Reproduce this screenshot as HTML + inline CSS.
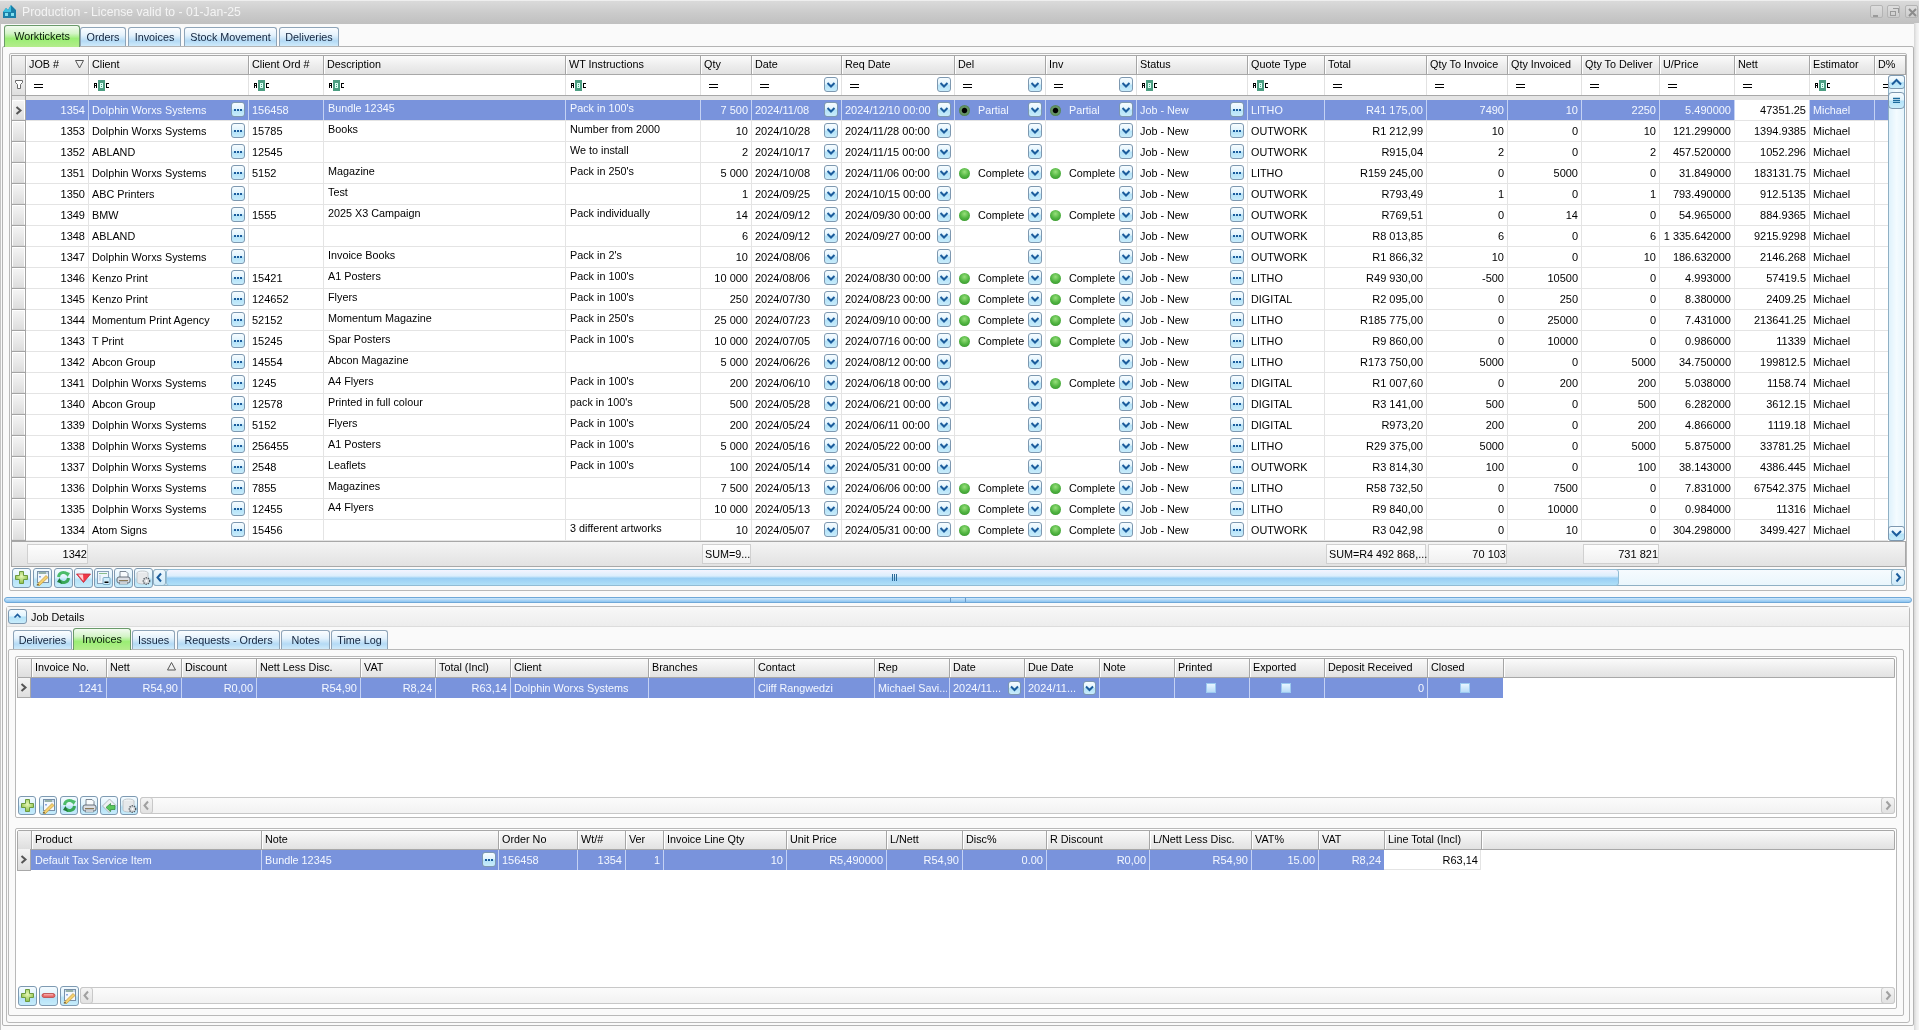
<!DOCTYPE html><html><head><meta charset="utf-8"><style>
*{box-sizing:border-box}
html,body{margin:0;padding:0}
body{width:1919px;height:1030px;overflow:hidden;background:#fafafa;font-family:"Liberation Sans",sans-serif;font-size:10.8px;color:#000;position:relative;will-change:transform}
div{position:absolute}
.t{white-space:nowrap;overflow:hidden;line-height:13px;height:14px}
.ts{white-space:nowrap;overflow:hidden;line-height:13px;height:14px;color:#f4f8ff}
.hl{background:#a3a3a3}
.gl{background:#e6e6e6}
.btn{border:1px solid #7d98b0;border-radius:3px;background:linear-gradient(#f6fcff 0%,#e2f4fd 45%,#b4e2f8 55%,#c8ecfb 100%)}
.dd svg,.el svg{position:absolute;left:0;top:0}
.tab{border:1px solid #8ea4b8;border-bottom:none;border-radius:3px 3px 0 0;background:linear-gradient(#fbfdff 0%,#e4f2fc 40%,#b4daf5 72%,#cfeafa 100%);color:#10203a;text-align:center;line-height:19px}
.tabA{border:1px solid #6a9a6a;border-bottom:none;border-radius:3px 3px 0 0;background:linear-gradient(#f2fbf0 0%,#d4f4c8 35%,#9aee74 60%,#b4ec8c 100%);color:#082008;text-align:center;line-height:19px}
.hdr{background:linear-gradient(#fbfbfb 0%,#efefef 45%,#e2e2e2 100%)}
.ind{background:linear-gradient(#f4f4f4,#dedede)}
.tbb{border:1px solid #7e9ab2;border-radius:3px;background:linear-gradient(#f4fbff 0%,#e0f3fc 45%,#b6e2f8 60%,#c6ecfb 100%)}
</style></head><body><div style="left:0px;top:0px;width:1919px;height:1px;background:#eeeeee"></div>
<div style="left:0px;top:1px;width:1919px;height:23px;background:linear-gradient(#dadada,#cacaca 55%,#c0c0c0)"></div>
<svg style="position:absolute;left:3px;top:4px" width="14" height="15" viewBox="0 0 14 15"><path d="M0 8 L3 4 L5 6 L8 1 L13 6 L13 14 L0 14 Z" fill="#1a7fa8"/><path d="M3 4 L5 6 L8 1 L8 8 L0 8Z" fill="#3cc0e0"/><rect x="2" y="9" width="3" height="3" fill="#7fe0f0"/><rect x="8" y="9" width="3" height="3" fill="#7fe0f0"/></svg>
<div class="t" style="left:22px;top:4px;width:260px;text-align:left;font-size:12.2px;color:#f4f4f4;line-height:16px;height:17px">Production - License valid to - 01-Jan-25</div>
<div style="left:1870px;top:5px;width:13px;height:13px;border:1px solid #b4b4b4;border-radius:2px;background:linear-gradient(#dedede,#cccccc)"><div style="left:2px;top:9px;width:5px;height:2px;background:#9a9a9a"></div></div>
<div style="left:1887px;top:5px;width:13px;height:13px;border:1px solid #b4b4b4;border-radius:2px;background:linear-gradient(#dedede,#cccccc)"><div style="left:2px;top:5px;width:6px;height:5px;border:1px solid #999"></div><div style="left:5px;top:2px;width:6px;height:5px;border:1px solid #999;border-left:none;border-bottom:none"></div></div>
<div style="left:1905px;top:5px;width:13px;height:13px;border:1px solid #b4b4b4;border-radius:2px;background:linear-gradient(#dedede,#cccccc)"><svg width="13" height="13" style="position:absolute;left:0;top:0"><path d="M3 3L10 10M10 3L3 10" stroke="#8c8c8c" stroke-width="2"/></svg></div>
<div style="left:1914px;top:23px;width:5px;height:1007px;background:linear-gradient(90deg,#d6d6d6,#ececec 50%,#f6f6f6)"></div>
<div style="left:0px;top:23px;width:1px;height:1007px;background:#c4c4c4"></div>
<div style="left:2px;top:46px;width:1912px;height:980px;border:1px solid #b4b4b4;border-radius:2px;background:#fafafa"></div>
<div class="tabA" style="left:4px;top:25px;width:76px;height:22px;"></div>
<div class="t" style="left:4px;top:30px;width:76px;text-align:center;color:#0a1f0a">Worktickets</div>
<div class="tab" style="left:80px;top:27px;width:46px;height:19px;"></div>
<div class="t" style="left:80px;top:31px;width:46px;text-align:center;color:#12243e">Orders</div>
<div class="tab" style="left:128px;top:27px;width:53px;height:19px;"></div>
<div class="t" style="left:128px;top:31px;width:53px;text-align:center;color:#12243e">Invoices</div>
<div class="tab" style="left:184px;top:27px;width:93px;height:19px;"></div>
<div class="t" style="left:184px;top:31px;width:93px;text-align:center;color:#12243e">Stock Movement</div>
<div class="tab" style="left:279px;top:27px;width:60px;height:19px;"></div>
<div class="t" style="left:279px;top:31px;width:60px;text-align:center;color:#12243e">Deliveries</div>
<div style="left:9px;top:53px;width:1898px;height:538px;border:1px solid #b9b9b9;border-radius:2px;background:#fafafa"></div>
<div style="left:11px;top:55px;width:1895px;height:487px;border:1px solid #a8a8a8;border-bottom:none;border-right:none;background:#fff"></div>
<div class="hdr" style="left:12px;top:56px;width:1893px;height:18px;"></div>
<div style="left:12px;top:74px;width:1893px;height:1px;background:#a8a8a8"></div>
<div class="ind" style="left:12px;top:56px;width:13px;height:18px;"></div>
<div style="left:25px;top:56px;width:1px;height:19px;background:#a5a5a5"></div>
<div style="left:26px;top:56px;width:1px;height:18px;background:#ffffff"></div>
<div style="left:88px;top:56px;width:1px;height:19px;background:#a5a5a5"></div>
<div style="left:89px;top:56px;width:1px;height:18px;background:#ffffff"></div>
<div style="left:248px;top:56px;width:1px;height:19px;background:#a5a5a5"></div>
<div style="left:249px;top:56px;width:1px;height:18px;background:#ffffff"></div>
<div style="left:323px;top:56px;width:1px;height:19px;background:#a5a5a5"></div>
<div style="left:324px;top:56px;width:1px;height:18px;background:#ffffff"></div>
<div style="left:565px;top:56px;width:1px;height:19px;background:#a5a5a5"></div>
<div style="left:566px;top:56px;width:1px;height:18px;background:#ffffff"></div>
<div style="left:700px;top:56px;width:1px;height:19px;background:#a5a5a5"></div>
<div style="left:701px;top:56px;width:1px;height:18px;background:#ffffff"></div>
<div style="left:751px;top:56px;width:1px;height:19px;background:#a5a5a5"></div>
<div style="left:752px;top:56px;width:1px;height:18px;background:#ffffff"></div>
<div style="left:841px;top:56px;width:1px;height:19px;background:#a5a5a5"></div>
<div style="left:842px;top:56px;width:1px;height:18px;background:#ffffff"></div>
<div style="left:954px;top:56px;width:1px;height:19px;background:#a5a5a5"></div>
<div style="left:955px;top:56px;width:1px;height:18px;background:#ffffff"></div>
<div style="left:1045px;top:56px;width:1px;height:19px;background:#a5a5a5"></div>
<div style="left:1046px;top:56px;width:1px;height:18px;background:#ffffff"></div>
<div style="left:1136px;top:56px;width:1px;height:19px;background:#a5a5a5"></div>
<div style="left:1137px;top:56px;width:1px;height:18px;background:#ffffff"></div>
<div style="left:1247px;top:56px;width:1px;height:19px;background:#a5a5a5"></div>
<div style="left:1248px;top:56px;width:1px;height:18px;background:#ffffff"></div>
<div style="left:1324px;top:56px;width:1px;height:19px;background:#a5a5a5"></div>
<div style="left:1325px;top:56px;width:1px;height:18px;background:#ffffff"></div>
<div style="left:1426px;top:56px;width:1px;height:19px;background:#a5a5a5"></div>
<div style="left:1427px;top:56px;width:1px;height:18px;background:#ffffff"></div>
<div style="left:1507px;top:56px;width:1px;height:19px;background:#a5a5a5"></div>
<div style="left:1508px;top:56px;width:1px;height:18px;background:#ffffff"></div>
<div style="left:1581px;top:56px;width:1px;height:19px;background:#a5a5a5"></div>
<div style="left:1582px;top:56px;width:1px;height:18px;background:#ffffff"></div>
<div style="left:1659px;top:56px;width:1px;height:19px;background:#a5a5a5"></div>
<div style="left:1660px;top:56px;width:1px;height:18px;background:#ffffff"></div>
<div style="left:1734px;top:56px;width:1px;height:19px;background:#a5a5a5"></div>
<div style="left:1735px;top:56px;width:1px;height:18px;background:#ffffff"></div>
<div style="left:1809px;top:56px;width:1px;height:19px;background:#a5a5a5"></div>
<div style="left:1810px;top:56px;width:1px;height:18px;background:#ffffff"></div>
<div style="left:1874px;top:56px;width:1px;height:19px;background:#a5a5a5"></div>
<div style="left:1875px;top:56px;width:1px;height:18px;background:#ffffff"></div>
<div style="left:1905px;top:56px;width:1px;height:19px;background:#a5a5a5"></div>
<div class="t" style="left:29px;top:58px;width:57px;text-align:left;">JOB #</div>
<div class="t" style="left:92px;top:58px;width:154px;text-align:left;">Client</div>
<div class="t" style="left:252px;top:58px;width:69px;text-align:left;">Client Ord #</div>
<div class="t" style="left:327px;top:58px;width:236px;text-align:left;">Description</div>
<div class="t" style="left:569px;top:58px;width:129px;text-align:left;">WT Instructions</div>
<div class="t" style="left:704px;top:58px;width:45px;text-align:left;">Qty</div>
<div class="t" style="left:755px;top:58px;width:84px;text-align:left;">Date</div>
<div class="t" style="left:845px;top:58px;width:107px;text-align:left;">Req Date</div>
<div class="t" style="left:958px;top:58px;width:85px;text-align:left;">Del</div>
<div class="t" style="left:1049px;top:58px;width:85px;text-align:left;">Inv</div>
<div class="t" style="left:1140px;top:58px;width:105px;text-align:left;">Status</div>
<div class="t" style="left:1251px;top:58px;width:71px;text-align:left;">Quote Type</div>
<div class="t" style="left:1328px;top:58px;width:96px;text-align:left;">Total</div>
<div class="t" style="left:1430px;top:58px;width:75px;text-align:left;">Qty To Invoice</div>
<div class="t" style="left:1511px;top:58px;width:68px;text-align:left;">Qty Invoiced</div>
<div class="t" style="left:1585px;top:58px;width:72px;text-align:left;">Qty To Deliver</div>
<div class="t" style="left:1663px;top:58px;width:69px;text-align:left;">U/Price</div>
<div class="t" style="left:1738px;top:58px;width:69px;text-align:left;">Nett</div>
<div class="t" style="left:1813px;top:58px;width:59px;text-align:left;">Estimator</div>
<div class="t" style="left:1878px;top:58px;width:25px;text-align:left;">D%</div>
<svg style="position:absolute;left:75px;top:60px" width="9" height="9"><path d="M0.5 0.5 L8.5 0.5 L4.5 8 Z" fill="none" stroke="#555" stroke-width="1"/></svg>
<div class="ind" style="left:12px;top:75px;width:13px;height:20px;"></div>
<svg style="position:absolute;left:14px;top:79px" width="10" height="11"><path d="M1.5 1.5 H8.5 V3.5 L6.5 5.5 V9.5 H3.5 V5.5 L1.5 3.5 Z" fill="#fff" stroke="#6a6a6a" stroke-width="1"/></svg>
<div style="left:88px;top:75px;width:1px;height:20px;background:#e2e2e2"></div>
<div style="left:248px;top:75px;width:1px;height:20px;background:#e2e2e2"></div>
<div style="left:323px;top:75px;width:1px;height:20px;background:#e2e2e2"></div>
<div style="left:565px;top:75px;width:1px;height:20px;background:#e2e2e2"></div>
<div style="left:700px;top:75px;width:1px;height:20px;background:#e2e2e2"></div>
<div style="left:751px;top:75px;width:1px;height:20px;background:#e2e2e2"></div>
<div style="left:841px;top:75px;width:1px;height:20px;background:#e2e2e2"></div>
<div style="left:954px;top:75px;width:1px;height:20px;background:#e2e2e2"></div>
<div style="left:1045px;top:75px;width:1px;height:20px;background:#e2e2e2"></div>
<div style="left:1136px;top:75px;width:1px;height:20px;background:#e2e2e2"></div>
<div style="left:1247px;top:75px;width:1px;height:20px;background:#e2e2e2"></div>
<div style="left:1324px;top:75px;width:1px;height:20px;background:#e2e2e2"></div>
<div style="left:1426px;top:75px;width:1px;height:20px;background:#e2e2e2"></div>
<div style="left:1507px;top:75px;width:1px;height:20px;background:#e2e2e2"></div>
<div style="left:1581px;top:75px;width:1px;height:20px;background:#e2e2e2"></div>
<div style="left:1659px;top:75px;width:1px;height:20px;background:#e2e2e2"></div>
<div style="left:1734px;top:75px;width:1px;height:20px;background:#e2e2e2"></div>
<div style="left:1809px;top:75px;width:1px;height:20px;background:#e2e2e2"></div>
<div style="left:1874px;top:75px;width:1px;height:20px;background:#e2e2e2"></div>
<div style="left:12px;top:95px;width:1893px;height:1px;background:#a8a8a8"></div>
<div style="left:12px;top:96px;width:1876px;height:4px;background:#e4e4e4"></div>
<svg style="position:absolute;left:34px;top:83px" width="9" height="6"><rect x="0" y="1" width="9" height="1" fill="#000"/><rect x="0" y="4" width="9" height="1" fill="#000"/></svg>
<svg style="position:absolute;left:94px;top:80px" width="16" height="11" shape-rendering="crispEdges"><rect x="4" y="0" width="7" height="11" rx="1" fill="#4c9e82"/><rect x="6" y="3" width="3" height="5" fill="#d8fff2"/><rect x="7" y="4" width="1" height="1" fill="#4c9e82"/><rect x="7" y="6" width="1" height="1" fill="#4c9e82"/><rect x="0" y="3" width="1" height="1" fill="#000"/><rect x="1" y="3" width="1" height="1" fill="#000"/><rect x="2" y="3" width="1" height="1" fill="#000"/><rect x="0" y="4" width="1" height="1" fill="#000"/><rect x="2" y="4" width="1" height="1" fill="#000"/><rect x="0" y="5" width="1" height="1" fill="#000"/><rect x="1" y="5" width="1" height="1" fill="#000"/><rect x="2" y="5" width="1" height="1" fill="#000"/><rect x="0" y="6" width="1" height="1" fill="#000"/><rect x="2" y="6" width="1" height="1" fill="#000"/><rect x="0" y="7" width="1" height="1" fill="#000"/><rect x="2" y="7" width="1" height="1" fill="#000"/><rect x="12" y="3" width="1" height="1" fill="#000"/><rect x="13" y="3" width="1" height="1" fill="#000"/><rect x="14" y="3" width="1" height="1" fill="#000"/><rect x="12" y="4" width="1" height="1" fill="#000"/><rect x="12" y="5" width="1" height="1" fill="#000"/><rect x="12" y="6" width="1" height="1" fill="#000"/><rect x="12" y="7" width="1" height="1" fill="#000"/><rect x="13" y="7" width="1" height="1" fill="#000"/><rect x="14" y="7" width="1" height="1" fill="#000"/></svg>
<svg style="position:absolute;left:254px;top:80px" width="16" height="11" shape-rendering="crispEdges"><rect x="4" y="0" width="7" height="11" rx="1" fill="#4c9e82"/><rect x="6" y="3" width="3" height="5" fill="#d8fff2"/><rect x="7" y="4" width="1" height="1" fill="#4c9e82"/><rect x="7" y="6" width="1" height="1" fill="#4c9e82"/><rect x="0" y="3" width="1" height="1" fill="#000"/><rect x="1" y="3" width="1" height="1" fill="#000"/><rect x="2" y="3" width="1" height="1" fill="#000"/><rect x="0" y="4" width="1" height="1" fill="#000"/><rect x="2" y="4" width="1" height="1" fill="#000"/><rect x="0" y="5" width="1" height="1" fill="#000"/><rect x="1" y="5" width="1" height="1" fill="#000"/><rect x="2" y="5" width="1" height="1" fill="#000"/><rect x="0" y="6" width="1" height="1" fill="#000"/><rect x="2" y="6" width="1" height="1" fill="#000"/><rect x="0" y="7" width="1" height="1" fill="#000"/><rect x="2" y="7" width="1" height="1" fill="#000"/><rect x="12" y="3" width="1" height="1" fill="#000"/><rect x="13" y="3" width="1" height="1" fill="#000"/><rect x="14" y="3" width="1" height="1" fill="#000"/><rect x="12" y="4" width="1" height="1" fill="#000"/><rect x="12" y="5" width="1" height="1" fill="#000"/><rect x="12" y="6" width="1" height="1" fill="#000"/><rect x="12" y="7" width="1" height="1" fill="#000"/><rect x="13" y="7" width="1" height="1" fill="#000"/><rect x="14" y="7" width="1" height="1" fill="#000"/></svg>
<svg style="position:absolute;left:329px;top:80px" width="16" height="11" shape-rendering="crispEdges"><rect x="4" y="0" width="7" height="11" rx="1" fill="#4c9e82"/><rect x="6" y="3" width="3" height="5" fill="#d8fff2"/><rect x="7" y="4" width="1" height="1" fill="#4c9e82"/><rect x="7" y="6" width="1" height="1" fill="#4c9e82"/><rect x="0" y="3" width="1" height="1" fill="#000"/><rect x="1" y="3" width="1" height="1" fill="#000"/><rect x="2" y="3" width="1" height="1" fill="#000"/><rect x="0" y="4" width="1" height="1" fill="#000"/><rect x="2" y="4" width="1" height="1" fill="#000"/><rect x="0" y="5" width="1" height="1" fill="#000"/><rect x="1" y="5" width="1" height="1" fill="#000"/><rect x="2" y="5" width="1" height="1" fill="#000"/><rect x="0" y="6" width="1" height="1" fill="#000"/><rect x="2" y="6" width="1" height="1" fill="#000"/><rect x="0" y="7" width="1" height="1" fill="#000"/><rect x="2" y="7" width="1" height="1" fill="#000"/><rect x="12" y="3" width="1" height="1" fill="#000"/><rect x="13" y="3" width="1" height="1" fill="#000"/><rect x="14" y="3" width="1" height="1" fill="#000"/><rect x="12" y="4" width="1" height="1" fill="#000"/><rect x="12" y="5" width="1" height="1" fill="#000"/><rect x="12" y="6" width="1" height="1" fill="#000"/><rect x="12" y="7" width="1" height="1" fill="#000"/><rect x="13" y="7" width="1" height="1" fill="#000"/><rect x="14" y="7" width="1" height="1" fill="#000"/></svg>
<svg style="position:absolute;left:571px;top:80px" width="16" height="11" shape-rendering="crispEdges"><rect x="4" y="0" width="7" height="11" rx="1" fill="#4c9e82"/><rect x="6" y="3" width="3" height="5" fill="#d8fff2"/><rect x="7" y="4" width="1" height="1" fill="#4c9e82"/><rect x="7" y="6" width="1" height="1" fill="#4c9e82"/><rect x="0" y="3" width="1" height="1" fill="#000"/><rect x="1" y="3" width="1" height="1" fill="#000"/><rect x="2" y="3" width="1" height="1" fill="#000"/><rect x="0" y="4" width="1" height="1" fill="#000"/><rect x="2" y="4" width="1" height="1" fill="#000"/><rect x="0" y="5" width="1" height="1" fill="#000"/><rect x="1" y="5" width="1" height="1" fill="#000"/><rect x="2" y="5" width="1" height="1" fill="#000"/><rect x="0" y="6" width="1" height="1" fill="#000"/><rect x="2" y="6" width="1" height="1" fill="#000"/><rect x="0" y="7" width="1" height="1" fill="#000"/><rect x="2" y="7" width="1" height="1" fill="#000"/><rect x="12" y="3" width="1" height="1" fill="#000"/><rect x="13" y="3" width="1" height="1" fill="#000"/><rect x="14" y="3" width="1" height="1" fill="#000"/><rect x="12" y="4" width="1" height="1" fill="#000"/><rect x="12" y="5" width="1" height="1" fill="#000"/><rect x="12" y="6" width="1" height="1" fill="#000"/><rect x="12" y="7" width="1" height="1" fill="#000"/><rect x="13" y="7" width="1" height="1" fill="#000"/><rect x="14" y="7" width="1" height="1" fill="#000"/></svg>
<svg style="position:absolute;left:709px;top:83px" width="9" height="6"><rect x="0" y="1" width="9" height="1" fill="#000"/><rect x="0" y="4" width="9" height="1" fill="#000"/></svg>
<svg style="position:absolute;left:760px;top:83px" width="9" height="6"><rect x="0" y="1" width="9" height="1" fill="#000"/><rect x="0" y="4" width="9" height="1" fill="#000"/></svg>
<div class="btn dd" style="left:824px;top:77px;width:14px;height:15px"><svg width="12" height="13"><path d="M2.5 5.0 L6.0 8.5 L9.5 5.0" fill="none" stroke="#1b5c9c" stroke-width="2"/></svg></div>
<svg style="position:absolute;left:850px;top:83px" width="9" height="6"><rect x="0" y="1" width="9" height="1" fill="#000"/><rect x="0" y="4" width="9" height="1" fill="#000"/></svg>
<div class="btn dd" style="left:937px;top:77px;width:14px;height:15px"><svg width="12" height="13"><path d="M2.5 5.0 L6.0 8.5 L9.5 5.0" fill="none" stroke="#1b5c9c" stroke-width="2"/></svg></div>
<svg style="position:absolute;left:963px;top:83px" width="9" height="6"><rect x="0" y="1" width="9" height="1" fill="#000"/><rect x="0" y="4" width="9" height="1" fill="#000"/></svg>
<div class="btn dd" style="left:1028px;top:77px;width:14px;height:15px"><svg width="12" height="13"><path d="M2.5 5.0 L6.0 8.5 L9.5 5.0" fill="none" stroke="#1b5c9c" stroke-width="2"/></svg></div>
<svg style="position:absolute;left:1054px;top:83px" width="9" height="6"><rect x="0" y="1" width="9" height="1" fill="#000"/><rect x="0" y="4" width="9" height="1" fill="#000"/></svg>
<div class="btn dd" style="left:1119px;top:77px;width:14px;height:15px"><svg width="12" height="13"><path d="M2.5 5.0 L6.0 8.5 L9.5 5.0" fill="none" stroke="#1b5c9c" stroke-width="2"/></svg></div>
<svg style="position:absolute;left:1142px;top:80px" width="16" height="11" shape-rendering="crispEdges"><rect x="4" y="0" width="7" height="11" rx="1" fill="#4c9e82"/><rect x="6" y="3" width="3" height="5" fill="#d8fff2"/><rect x="7" y="4" width="1" height="1" fill="#4c9e82"/><rect x="7" y="6" width="1" height="1" fill="#4c9e82"/><rect x="0" y="3" width="1" height="1" fill="#000"/><rect x="1" y="3" width="1" height="1" fill="#000"/><rect x="2" y="3" width="1" height="1" fill="#000"/><rect x="0" y="4" width="1" height="1" fill="#000"/><rect x="2" y="4" width="1" height="1" fill="#000"/><rect x="0" y="5" width="1" height="1" fill="#000"/><rect x="1" y="5" width="1" height="1" fill="#000"/><rect x="2" y="5" width="1" height="1" fill="#000"/><rect x="0" y="6" width="1" height="1" fill="#000"/><rect x="2" y="6" width="1" height="1" fill="#000"/><rect x="0" y="7" width="1" height="1" fill="#000"/><rect x="2" y="7" width="1" height="1" fill="#000"/><rect x="12" y="3" width="1" height="1" fill="#000"/><rect x="13" y="3" width="1" height="1" fill="#000"/><rect x="14" y="3" width="1" height="1" fill="#000"/><rect x="12" y="4" width="1" height="1" fill="#000"/><rect x="12" y="5" width="1" height="1" fill="#000"/><rect x="12" y="6" width="1" height="1" fill="#000"/><rect x="12" y="7" width="1" height="1" fill="#000"/><rect x="13" y="7" width="1" height="1" fill="#000"/><rect x="14" y="7" width="1" height="1" fill="#000"/></svg>
<svg style="position:absolute;left:1253px;top:80px" width="16" height="11" shape-rendering="crispEdges"><rect x="4" y="0" width="7" height="11" rx="1" fill="#4c9e82"/><rect x="6" y="3" width="3" height="5" fill="#d8fff2"/><rect x="7" y="4" width="1" height="1" fill="#4c9e82"/><rect x="7" y="6" width="1" height="1" fill="#4c9e82"/><rect x="0" y="3" width="1" height="1" fill="#000"/><rect x="1" y="3" width="1" height="1" fill="#000"/><rect x="2" y="3" width="1" height="1" fill="#000"/><rect x="0" y="4" width="1" height="1" fill="#000"/><rect x="2" y="4" width="1" height="1" fill="#000"/><rect x="0" y="5" width="1" height="1" fill="#000"/><rect x="1" y="5" width="1" height="1" fill="#000"/><rect x="2" y="5" width="1" height="1" fill="#000"/><rect x="0" y="6" width="1" height="1" fill="#000"/><rect x="2" y="6" width="1" height="1" fill="#000"/><rect x="0" y="7" width="1" height="1" fill="#000"/><rect x="2" y="7" width="1" height="1" fill="#000"/><rect x="12" y="3" width="1" height="1" fill="#000"/><rect x="13" y="3" width="1" height="1" fill="#000"/><rect x="14" y="3" width="1" height="1" fill="#000"/><rect x="12" y="4" width="1" height="1" fill="#000"/><rect x="12" y="5" width="1" height="1" fill="#000"/><rect x="12" y="6" width="1" height="1" fill="#000"/><rect x="12" y="7" width="1" height="1" fill="#000"/><rect x="13" y="7" width="1" height="1" fill="#000"/><rect x="14" y="7" width="1" height="1" fill="#000"/></svg>
<svg style="position:absolute;left:1333px;top:83px" width="9" height="6"><rect x="0" y="1" width="9" height="1" fill="#000"/><rect x="0" y="4" width="9" height="1" fill="#000"/></svg>
<svg style="position:absolute;left:1435px;top:83px" width="9" height="6"><rect x="0" y="1" width="9" height="1" fill="#000"/><rect x="0" y="4" width="9" height="1" fill="#000"/></svg>
<svg style="position:absolute;left:1516px;top:83px" width="9" height="6"><rect x="0" y="1" width="9" height="1" fill="#000"/><rect x="0" y="4" width="9" height="1" fill="#000"/></svg>
<svg style="position:absolute;left:1590px;top:83px" width="9" height="6"><rect x="0" y="1" width="9" height="1" fill="#000"/><rect x="0" y="4" width="9" height="1" fill="#000"/></svg>
<svg style="position:absolute;left:1668px;top:83px" width="9" height="6"><rect x="0" y="1" width="9" height="1" fill="#000"/><rect x="0" y="4" width="9" height="1" fill="#000"/></svg>
<svg style="position:absolute;left:1743px;top:83px" width="9" height="6"><rect x="0" y="1" width="9" height="1" fill="#000"/><rect x="0" y="4" width="9" height="1" fill="#000"/></svg>
<svg style="position:absolute;left:1815px;top:80px" width="16" height="11" shape-rendering="crispEdges"><rect x="4" y="0" width="7" height="11" rx="1" fill="#4c9e82"/><rect x="6" y="3" width="3" height="5" fill="#d8fff2"/><rect x="7" y="4" width="1" height="1" fill="#4c9e82"/><rect x="7" y="6" width="1" height="1" fill="#4c9e82"/><rect x="0" y="3" width="1" height="1" fill="#000"/><rect x="1" y="3" width="1" height="1" fill="#000"/><rect x="2" y="3" width="1" height="1" fill="#000"/><rect x="0" y="4" width="1" height="1" fill="#000"/><rect x="2" y="4" width="1" height="1" fill="#000"/><rect x="0" y="5" width="1" height="1" fill="#000"/><rect x="1" y="5" width="1" height="1" fill="#000"/><rect x="2" y="5" width="1" height="1" fill="#000"/><rect x="0" y="6" width="1" height="1" fill="#000"/><rect x="2" y="6" width="1" height="1" fill="#000"/><rect x="0" y="7" width="1" height="1" fill="#000"/><rect x="2" y="7" width="1" height="1" fill="#000"/><rect x="12" y="3" width="1" height="1" fill="#000"/><rect x="13" y="3" width="1" height="1" fill="#000"/><rect x="14" y="3" width="1" height="1" fill="#000"/><rect x="12" y="4" width="1" height="1" fill="#000"/><rect x="12" y="5" width="1" height="1" fill="#000"/><rect x="12" y="6" width="1" height="1" fill="#000"/><rect x="12" y="7" width="1" height="1" fill="#000"/><rect x="13" y="7" width="1" height="1" fill="#000"/><rect x="14" y="7" width="1" height="1" fill="#000"/></svg>
<svg style="position:absolute;left:1883px;top:83px" width="9" height="6"><rect x="0" y="1" width="9" height="1" fill="#000"/><rect x="0" y="4" width="9" height="1" fill="#000"/></svg>
<div class="ind" style="left:12px;top:100px;width:13px;height:20px;border:1px solid #fff;border-bottom-color:#d8d8d8"></div>
<div style="left:12px;top:120px;width:13px;height:1px;background:#a4a4a4"></div>
<div style="left:25px;top:100px;width:1863px;height:20px;background:#7993dc"></div>
<div style="left:1734px;top:100px;width:75px;height:20px;background:#fff"></div>
<svg style="position:absolute;left:15px;top:106px" width="8" height="9"><path d="M1.5 1 L5.5 4.5 L1.5 8" fill="none" stroke="#555" stroke-width="2"/></svg>
<div style="left:25px;top:120px;width:1863px;height:1px;background:#e4e4e4"></div>
<div class="ts" style="left:27px;top:104px;width:58px;text-align:right;font-size:11px;">1354</div>
<div class="ts" style="left:92px;top:104px;width:140px;text-align:left;">Dolphin Worxs Systems</div>
<div class="btn el" style="left:231px;top:102px;width:14px;height:15px"><div style="left:2px;top:6px;width:2px;height:2px;background:#1b5c9c"></div><div style="left:5px;top:6px;width:2px;height:2px;background:#1b5c9c"></div><div style="left:8px;top:6px;width:2px;height:2px;background:#1b5c9c"></div></div>
<div class="ts" style="left:252px;top:104px;width:69px;text-align:left;font-size:11px;">156458</div>
<div class="ts" style="left:328px;top:102px;width:234px;text-align:left;">Bundle 12345</div>
<div class="ts" style="left:570px;top:102px;width:127px;text-align:left;">Pack in 100's</div>
<div class="ts" style="left:702px;top:104px;width:46px;text-align:right;font-size:11px;">7 500</div>
<div class="ts" style="left:755px;top:104px;width:70px;text-align:left;font-size:11px;">2024/11/08</div>
<div class="btn dd" style="left:824px;top:102px;width:14px;height:15px"><svg width="12" height="13"><path d="M2.5 5.0 L6.0 8.5 L9.5 5.0" fill="none" stroke="#1b5c9c" stroke-width="2"/></svg></div>
<div class="ts" style="left:845px;top:104px;width:93px;text-align:left;font-size:11px;">2024/12/10 00:00</div>
<div class="btn dd" style="left:937px;top:102px;width:14px;height:15px"><svg width="12" height="13"><path d="M2.5 5.0 L6.0 8.5 L9.5 5.0" fill="none" stroke="#1b5c9c" stroke-width="2"/></svg></div>
<div style="left:959px;top:105px;width:11px;height:11px;border-radius:50%;background:radial-gradient(circle,#000 0%,#000 28%,#6a9a6a 42%,#3c6a3c 100%)"></div>
<div class="ts" style="left:978px;top:104px;width:60px;text-align:left;">Partial</div>
<div class="btn dd" style="left:1028px;top:102px;width:14px;height:15px"><svg width="12" height="13"><path d="M2.5 5.0 L6.0 8.5 L9.5 5.0" fill="none" stroke="#1b5c9c" stroke-width="2"/></svg></div>
<div style="left:1050px;top:105px;width:11px;height:11px;border-radius:50%;background:radial-gradient(circle,#000 0%,#000 28%,#6a9a6a 42%,#3c6a3c 100%)"></div>
<div class="ts" style="left:1069px;top:104px;width:60px;text-align:left;">Partial</div>
<div class="btn dd" style="left:1119px;top:102px;width:14px;height:15px"><svg width="12" height="13"><path d="M2.5 5.0 L6.0 8.5 L9.5 5.0" fill="none" stroke="#1b5c9c" stroke-width="2"/></svg></div>
<div class="ts" style="left:1140px;top:104px;width:91px;text-align:left;">Job - New</div>
<div class="btn el" style="left:1230px;top:102px;width:14px;height:15px"><div style="left:2px;top:6px;width:2px;height:2px;background:#1b5c9c"></div><div style="left:5px;top:6px;width:2px;height:2px;background:#1b5c9c"></div><div style="left:8px;top:6px;width:2px;height:2px;background:#1b5c9c"></div></div>
<div class="ts" style="left:1251px;top:104px;width:71px;text-align:left;">LITHO</div>
<div class="ts" style="left:1326px;top:104px;width:97px;text-align:right;font-size:11px;">R41 175,00</div>
<div class="ts" style="left:1428px;top:104px;width:76px;text-align:right;font-size:11px;">7490</div>
<div class="ts" style="left:1509px;top:104px;width:69px;text-align:right;font-size:11px;">10</div>
<div class="ts" style="left:1583px;top:104px;width:73px;text-align:right;font-size:11px;">2250</div>
<div class="ts" style="left:1661px;top:104px;width:70px;text-align:right;font-size:11px;">5.490000</div>
<div class="t" style="left:1736px;top:104px;width:70px;text-align:right;font-size:11px;">47351.25</div>
<div class="ts" style="left:1813px;top:104px;width:59px;text-align:left;">Michael</div>
<div class="ind" style="left:12px;top:121px;width:13px;height:20px;border:1px solid #fff;border-bottom-color:#d8d8d8"></div>
<div style="left:12px;top:141px;width:13px;height:1px;background:#a4a4a4"></div>
<div style="left:25px;top:141px;width:1863px;height:1px;background:#e4e4e4"></div>
<div class="t" style="left:27px;top:125px;width:58px;text-align:right;font-size:11px;">1353</div>
<div class="t" style="left:92px;top:125px;width:140px;text-align:left;">Dolphin Worxs Systems</div>
<div class="btn el" style="left:231px;top:123px;width:14px;height:15px"><div style="left:2px;top:6px;width:2px;height:2px;background:#1b5c9c"></div><div style="left:5px;top:6px;width:2px;height:2px;background:#1b5c9c"></div><div style="left:8px;top:6px;width:2px;height:2px;background:#1b5c9c"></div></div>
<div class="t" style="left:252px;top:125px;width:69px;text-align:left;font-size:11px;">15785</div>
<div class="t" style="left:328px;top:123px;width:234px;text-align:left;">Books</div>
<div class="t" style="left:570px;top:123px;width:127px;text-align:left;">Number from 2000</div>
<div class="t" style="left:702px;top:125px;width:46px;text-align:right;font-size:11px;">10</div>
<div class="t" style="left:755px;top:125px;width:70px;text-align:left;font-size:11px;">2024/10/28</div>
<div class="btn dd" style="left:824px;top:123px;width:14px;height:15px"><svg width="12" height="13"><path d="M2.5 5.0 L6.0 8.5 L9.5 5.0" fill="none" stroke="#1b5c9c" stroke-width="2"/></svg></div>
<div class="t" style="left:845px;top:125px;width:93px;text-align:left;font-size:11px;">2024/11/28 00:00</div>
<div class="btn dd" style="left:937px;top:123px;width:14px;height:15px"><svg width="12" height="13"><path d="M2.5 5.0 L6.0 8.5 L9.5 5.0" fill="none" stroke="#1b5c9c" stroke-width="2"/></svg></div>
<div class="btn dd" style="left:1028px;top:123px;width:14px;height:15px"><svg width="12" height="13"><path d="M2.5 5.0 L6.0 8.5 L9.5 5.0" fill="none" stroke="#1b5c9c" stroke-width="2"/></svg></div>
<div class="btn dd" style="left:1119px;top:123px;width:14px;height:15px"><svg width="12" height="13"><path d="M2.5 5.0 L6.0 8.5 L9.5 5.0" fill="none" stroke="#1b5c9c" stroke-width="2"/></svg></div>
<div class="t" style="left:1140px;top:125px;width:91px;text-align:left;">Job - New</div>
<div class="btn el" style="left:1230px;top:123px;width:14px;height:15px"><div style="left:2px;top:6px;width:2px;height:2px;background:#1b5c9c"></div><div style="left:5px;top:6px;width:2px;height:2px;background:#1b5c9c"></div><div style="left:8px;top:6px;width:2px;height:2px;background:#1b5c9c"></div></div>
<div class="t" style="left:1251px;top:125px;width:71px;text-align:left;">OUTWORK</div>
<div class="t" style="left:1326px;top:125px;width:97px;text-align:right;font-size:11px;">R1 212,99</div>
<div class="t" style="left:1428px;top:125px;width:76px;text-align:right;font-size:11px;">10</div>
<div class="t" style="left:1509px;top:125px;width:69px;text-align:right;font-size:11px;">0</div>
<div class="t" style="left:1583px;top:125px;width:73px;text-align:right;font-size:11px;">10</div>
<div class="t" style="left:1661px;top:125px;width:70px;text-align:right;font-size:11px;">121.299000</div>
<div class="t" style="left:1736px;top:125px;width:70px;text-align:right;font-size:11px;">1394.9385</div>
<div class="t" style="left:1813px;top:125px;width:59px;text-align:left;">Michael</div>
<div class="ind" style="left:12px;top:142px;width:13px;height:20px;border:1px solid #fff;border-bottom-color:#d8d8d8"></div>
<div style="left:12px;top:162px;width:13px;height:1px;background:#a4a4a4"></div>
<div style="left:25px;top:162px;width:1863px;height:1px;background:#e4e4e4"></div>
<div class="t" style="left:27px;top:146px;width:58px;text-align:right;font-size:11px;">1352</div>
<div class="t" style="left:92px;top:146px;width:140px;text-align:left;">ABLAND</div>
<div class="btn el" style="left:231px;top:144px;width:14px;height:15px"><div style="left:2px;top:6px;width:2px;height:2px;background:#1b5c9c"></div><div style="left:5px;top:6px;width:2px;height:2px;background:#1b5c9c"></div><div style="left:8px;top:6px;width:2px;height:2px;background:#1b5c9c"></div></div>
<div class="t" style="left:252px;top:146px;width:69px;text-align:left;font-size:11px;">12545</div>
<div class="t" style="left:570px;top:144px;width:127px;text-align:left;">We to install</div>
<div class="t" style="left:702px;top:146px;width:46px;text-align:right;font-size:11px;">2</div>
<div class="t" style="left:755px;top:146px;width:70px;text-align:left;font-size:11px;">2024/10/17</div>
<div class="btn dd" style="left:824px;top:144px;width:14px;height:15px"><svg width="12" height="13"><path d="M2.5 5.0 L6.0 8.5 L9.5 5.0" fill="none" stroke="#1b5c9c" stroke-width="2"/></svg></div>
<div class="t" style="left:845px;top:146px;width:93px;text-align:left;font-size:11px;">2024/11/15 00:00</div>
<div class="btn dd" style="left:937px;top:144px;width:14px;height:15px"><svg width="12" height="13"><path d="M2.5 5.0 L6.0 8.5 L9.5 5.0" fill="none" stroke="#1b5c9c" stroke-width="2"/></svg></div>
<div class="btn dd" style="left:1028px;top:144px;width:14px;height:15px"><svg width="12" height="13"><path d="M2.5 5.0 L6.0 8.5 L9.5 5.0" fill="none" stroke="#1b5c9c" stroke-width="2"/></svg></div>
<div class="btn dd" style="left:1119px;top:144px;width:14px;height:15px"><svg width="12" height="13"><path d="M2.5 5.0 L6.0 8.5 L9.5 5.0" fill="none" stroke="#1b5c9c" stroke-width="2"/></svg></div>
<div class="t" style="left:1140px;top:146px;width:91px;text-align:left;">Job - New</div>
<div class="btn el" style="left:1230px;top:144px;width:14px;height:15px"><div style="left:2px;top:6px;width:2px;height:2px;background:#1b5c9c"></div><div style="left:5px;top:6px;width:2px;height:2px;background:#1b5c9c"></div><div style="left:8px;top:6px;width:2px;height:2px;background:#1b5c9c"></div></div>
<div class="t" style="left:1251px;top:146px;width:71px;text-align:left;">OUTWORK</div>
<div class="t" style="left:1326px;top:146px;width:97px;text-align:right;font-size:11px;">R915,04</div>
<div class="t" style="left:1428px;top:146px;width:76px;text-align:right;font-size:11px;">2</div>
<div class="t" style="left:1509px;top:146px;width:69px;text-align:right;font-size:11px;">0</div>
<div class="t" style="left:1583px;top:146px;width:73px;text-align:right;font-size:11px;">2</div>
<div class="t" style="left:1661px;top:146px;width:70px;text-align:right;font-size:11px;">457.520000</div>
<div class="t" style="left:1736px;top:146px;width:70px;text-align:right;font-size:11px;">1052.296</div>
<div class="t" style="left:1813px;top:146px;width:59px;text-align:left;">Michael</div>
<div class="ind" style="left:12px;top:163px;width:13px;height:20px;border:1px solid #fff;border-bottom-color:#d8d8d8"></div>
<div style="left:12px;top:183px;width:13px;height:1px;background:#a4a4a4"></div>
<div style="left:25px;top:183px;width:1863px;height:1px;background:#e4e4e4"></div>
<div class="t" style="left:27px;top:167px;width:58px;text-align:right;font-size:11px;">1351</div>
<div class="t" style="left:92px;top:167px;width:140px;text-align:left;">Dolphin Worxs Systems</div>
<div class="btn el" style="left:231px;top:165px;width:14px;height:15px"><div style="left:2px;top:6px;width:2px;height:2px;background:#1b5c9c"></div><div style="left:5px;top:6px;width:2px;height:2px;background:#1b5c9c"></div><div style="left:8px;top:6px;width:2px;height:2px;background:#1b5c9c"></div></div>
<div class="t" style="left:252px;top:167px;width:69px;text-align:left;font-size:11px;">5152</div>
<div class="t" style="left:328px;top:165px;width:234px;text-align:left;">Magazine</div>
<div class="t" style="left:570px;top:165px;width:127px;text-align:left;">Pack in 250's</div>
<div class="t" style="left:702px;top:167px;width:46px;text-align:right;font-size:11px;">5 000</div>
<div class="t" style="left:755px;top:167px;width:70px;text-align:left;font-size:11px;">2024/10/08</div>
<div class="btn dd" style="left:824px;top:165px;width:14px;height:15px"><svg width="12" height="13"><path d="M2.5 5.0 L6.0 8.5 L9.5 5.0" fill="none" stroke="#1b5c9c" stroke-width="2"/></svg></div>
<div class="t" style="left:845px;top:167px;width:93px;text-align:left;font-size:11px;">2024/11/06 00:00</div>
<div class="btn dd" style="left:937px;top:165px;width:14px;height:15px"><svg width="12" height="13"><path d="M2.5 5.0 L6.0 8.5 L9.5 5.0" fill="none" stroke="#1b5c9c" stroke-width="2"/></svg></div>
<div style="left:959px;top:168px;width:11px;height:11px;border-radius:50%;background:radial-gradient(circle at 50% 35%,#98e07c 0%,#52b542 50%,#2f8d28 100%)"></div>
<div class="t" style="left:978px;top:167px;width:60px;text-align:left;">Complete</div>
<div class="btn dd" style="left:1028px;top:165px;width:14px;height:15px"><svg width="12" height="13"><path d="M2.5 5.0 L6.0 8.5 L9.5 5.0" fill="none" stroke="#1b5c9c" stroke-width="2"/></svg></div>
<div style="left:1050px;top:168px;width:11px;height:11px;border-radius:50%;background:radial-gradient(circle at 50% 35%,#98e07c 0%,#52b542 50%,#2f8d28 100%)"></div>
<div class="t" style="left:1069px;top:167px;width:60px;text-align:left;">Complete</div>
<div class="btn dd" style="left:1119px;top:165px;width:14px;height:15px"><svg width="12" height="13"><path d="M2.5 5.0 L6.0 8.5 L9.5 5.0" fill="none" stroke="#1b5c9c" stroke-width="2"/></svg></div>
<div class="t" style="left:1140px;top:167px;width:91px;text-align:left;">Job - New</div>
<div class="btn el" style="left:1230px;top:165px;width:14px;height:15px"><div style="left:2px;top:6px;width:2px;height:2px;background:#1b5c9c"></div><div style="left:5px;top:6px;width:2px;height:2px;background:#1b5c9c"></div><div style="left:8px;top:6px;width:2px;height:2px;background:#1b5c9c"></div></div>
<div class="t" style="left:1251px;top:167px;width:71px;text-align:left;">LITHO</div>
<div class="t" style="left:1326px;top:167px;width:97px;text-align:right;font-size:11px;">R159 245,00</div>
<div class="t" style="left:1428px;top:167px;width:76px;text-align:right;font-size:11px;">0</div>
<div class="t" style="left:1509px;top:167px;width:69px;text-align:right;font-size:11px;">5000</div>
<div class="t" style="left:1583px;top:167px;width:73px;text-align:right;font-size:11px;">0</div>
<div class="t" style="left:1661px;top:167px;width:70px;text-align:right;font-size:11px;">31.849000</div>
<div class="t" style="left:1736px;top:167px;width:70px;text-align:right;font-size:11px;">183131.75</div>
<div class="t" style="left:1813px;top:167px;width:59px;text-align:left;">Michael</div>
<div class="ind" style="left:12px;top:184px;width:13px;height:20px;border:1px solid #fff;border-bottom-color:#d8d8d8"></div>
<div style="left:12px;top:204px;width:13px;height:1px;background:#a4a4a4"></div>
<div style="left:25px;top:204px;width:1863px;height:1px;background:#e4e4e4"></div>
<div class="t" style="left:27px;top:188px;width:58px;text-align:right;font-size:11px;">1350</div>
<div class="t" style="left:92px;top:188px;width:140px;text-align:left;">ABC Printers</div>
<div class="btn el" style="left:231px;top:186px;width:14px;height:15px"><div style="left:2px;top:6px;width:2px;height:2px;background:#1b5c9c"></div><div style="left:5px;top:6px;width:2px;height:2px;background:#1b5c9c"></div><div style="left:8px;top:6px;width:2px;height:2px;background:#1b5c9c"></div></div>
<div class="t" style="left:328px;top:186px;width:234px;text-align:left;">Test</div>
<div class="t" style="left:702px;top:188px;width:46px;text-align:right;font-size:11px;">1</div>
<div class="t" style="left:755px;top:188px;width:70px;text-align:left;font-size:11px;">2024/09/25</div>
<div class="btn dd" style="left:824px;top:186px;width:14px;height:15px"><svg width="12" height="13"><path d="M2.5 5.0 L6.0 8.5 L9.5 5.0" fill="none" stroke="#1b5c9c" stroke-width="2"/></svg></div>
<div class="t" style="left:845px;top:188px;width:93px;text-align:left;font-size:11px;">2024/10/15 00:00</div>
<div class="btn dd" style="left:937px;top:186px;width:14px;height:15px"><svg width="12" height="13"><path d="M2.5 5.0 L6.0 8.5 L9.5 5.0" fill="none" stroke="#1b5c9c" stroke-width="2"/></svg></div>
<div class="btn dd" style="left:1028px;top:186px;width:14px;height:15px"><svg width="12" height="13"><path d="M2.5 5.0 L6.0 8.5 L9.5 5.0" fill="none" stroke="#1b5c9c" stroke-width="2"/></svg></div>
<div class="btn dd" style="left:1119px;top:186px;width:14px;height:15px"><svg width="12" height="13"><path d="M2.5 5.0 L6.0 8.5 L9.5 5.0" fill="none" stroke="#1b5c9c" stroke-width="2"/></svg></div>
<div class="t" style="left:1140px;top:188px;width:91px;text-align:left;">Job - New</div>
<div class="btn el" style="left:1230px;top:186px;width:14px;height:15px"><div style="left:2px;top:6px;width:2px;height:2px;background:#1b5c9c"></div><div style="left:5px;top:6px;width:2px;height:2px;background:#1b5c9c"></div><div style="left:8px;top:6px;width:2px;height:2px;background:#1b5c9c"></div></div>
<div class="t" style="left:1251px;top:188px;width:71px;text-align:left;">OUTWORK</div>
<div class="t" style="left:1326px;top:188px;width:97px;text-align:right;font-size:11px;">R793,49</div>
<div class="t" style="left:1428px;top:188px;width:76px;text-align:right;font-size:11px;">1</div>
<div class="t" style="left:1509px;top:188px;width:69px;text-align:right;font-size:11px;">0</div>
<div class="t" style="left:1583px;top:188px;width:73px;text-align:right;font-size:11px;">1</div>
<div class="t" style="left:1661px;top:188px;width:70px;text-align:right;font-size:11px;">793.490000</div>
<div class="t" style="left:1736px;top:188px;width:70px;text-align:right;font-size:11px;">912.5135</div>
<div class="t" style="left:1813px;top:188px;width:59px;text-align:left;">Michael</div>
<div class="ind" style="left:12px;top:205px;width:13px;height:20px;border:1px solid #fff;border-bottom-color:#d8d8d8"></div>
<div style="left:12px;top:225px;width:13px;height:1px;background:#a4a4a4"></div>
<div style="left:25px;top:225px;width:1863px;height:1px;background:#e4e4e4"></div>
<div class="t" style="left:27px;top:209px;width:58px;text-align:right;font-size:11px;">1349</div>
<div class="t" style="left:92px;top:209px;width:140px;text-align:left;">BMW</div>
<div class="btn el" style="left:231px;top:207px;width:14px;height:15px"><div style="left:2px;top:6px;width:2px;height:2px;background:#1b5c9c"></div><div style="left:5px;top:6px;width:2px;height:2px;background:#1b5c9c"></div><div style="left:8px;top:6px;width:2px;height:2px;background:#1b5c9c"></div></div>
<div class="t" style="left:252px;top:209px;width:69px;text-align:left;font-size:11px;">1555</div>
<div class="t" style="left:328px;top:207px;width:234px;text-align:left;">2025 X3 Campaign</div>
<div class="t" style="left:570px;top:207px;width:127px;text-align:left;">Pack individually</div>
<div class="t" style="left:702px;top:209px;width:46px;text-align:right;font-size:11px;">14</div>
<div class="t" style="left:755px;top:209px;width:70px;text-align:left;font-size:11px;">2024/09/12</div>
<div class="btn dd" style="left:824px;top:207px;width:14px;height:15px"><svg width="12" height="13"><path d="M2.5 5.0 L6.0 8.5 L9.5 5.0" fill="none" stroke="#1b5c9c" stroke-width="2"/></svg></div>
<div class="t" style="left:845px;top:209px;width:93px;text-align:left;font-size:11px;">2024/09/30 00:00</div>
<div class="btn dd" style="left:937px;top:207px;width:14px;height:15px"><svg width="12" height="13"><path d="M2.5 5.0 L6.0 8.5 L9.5 5.0" fill="none" stroke="#1b5c9c" stroke-width="2"/></svg></div>
<div style="left:959px;top:210px;width:11px;height:11px;border-radius:50%;background:radial-gradient(circle at 50% 35%,#98e07c 0%,#52b542 50%,#2f8d28 100%)"></div>
<div class="t" style="left:978px;top:209px;width:60px;text-align:left;">Complete</div>
<div class="btn dd" style="left:1028px;top:207px;width:14px;height:15px"><svg width="12" height="13"><path d="M2.5 5.0 L6.0 8.5 L9.5 5.0" fill="none" stroke="#1b5c9c" stroke-width="2"/></svg></div>
<div style="left:1050px;top:210px;width:11px;height:11px;border-radius:50%;background:radial-gradient(circle at 50% 35%,#98e07c 0%,#52b542 50%,#2f8d28 100%)"></div>
<div class="t" style="left:1069px;top:209px;width:60px;text-align:left;">Complete</div>
<div class="btn dd" style="left:1119px;top:207px;width:14px;height:15px"><svg width="12" height="13"><path d="M2.5 5.0 L6.0 8.5 L9.5 5.0" fill="none" stroke="#1b5c9c" stroke-width="2"/></svg></div>
<div class="t" style="left:1140px;top:209px;width:91px;text-align:left;">Job - New</div>
<div class="btn el" style="left:1230px;top:207px;width:14px;height:15px"><div style="left:2px;top:6px;width:2px;height:2px;background:#1b5c9c"></div><div style="left:5px;top:6px;width:2px;height:2px;background:#1b5c9c"></div><div style="left:8px;top:6px;width:2px;height:2px;background:#1b5c9c"></div></div>
<div class="t" style="left:1251px;top:209px;width:71px;text-align:left;">OUTWORK</div>
<div class="t" style="left:1326px;top:209px;width:97px;text-align:right;font-size:11px;">R769,51</div>
<div class="t" style="left:1428px;top:209px;width:76px;text-align:right;font-size:11px;">0</div>
<div class="t" style="left:1509px;top:209px;width:69px;text-align:right;font-size:11px;">14</div>
<div class="t" style="left:1583px;top:209px;width:73px;text-align:right;font-size:11px;">0</div>
<div class="t" style="left:1661px;top:209px;width:70px;text-align:right;font-size:11px;">54.965000</div>
<div class="t" style="left:1736px;top:209px;width:70px;text-align:right;font-size:11px;">884.9365</div>
<div class="t" style="left:1813px;top:209px;width:59px;text-align:left;">Michael</div>
<div class="ind" style="left:12px;top:226px;width:13px;height:20px;border:1px solid #fff;border-bottom-color:#d8d8d8"></div>
<div style="left:12px;top:246px;width:13px;height:1px;background:#a4a4a4"></div>
<div style="left:25px;top:246px;width:1863px;height:1px;background:#e4e4e4"></div>
<div class="t" style="left:27px;top:230px;width:58px;text-align:right;font-size:11px;">1348</div>
<div class="t" style="left:92px;top:230px;width:140px;text-align:left;">ABLAND</div>
<div class="btn el" style="left:231px;top:228px;width:14px;height:15px"><div style="left:2px;top:6px;width:2px;height:2px;background:#1b5c9c"></div><div style="left:5px;top:6px;width:2px;height:2px;background:#1b5c9c"></div><div style="left:8px;top:6px;width:2px;height:2px;background:#1b5c9c"></div></div>
<div class="t" style="left:702px;top:230px;width:46px;text-align:right;font-size:11px;">6</div>
<div class="t" style="left:755px;top:230px;width:70px;text-align:left;font-size:11px;">2024/09/12</div>
<div class="btn dd" style="left:824px;top:228px;width:14px;height:15px"><svg width="12" height="13"><path d="M2.5 5.0 L6.0 8.5 L9.5 5.0" fill="none" stroke="#1b5c9c" stroke-width="2"/></svg></div>
<div class="t" style="left:845px;top:230px;width:93px;text-align:left;font-size:11px;">2024/09/27 00:00</div>
<div class="btn dd" style="left:937px;top:228px;width:14px;height:15px"><svg width="12" height="13"><path d="M2.5 5.0 L6.0 8.5 L9.5 5.0" fill="none" stroke="#1b5c9c" stroke-width="2"/></svg></div>
<div class="btn dd" style="left:1028px;top:228px;width:14px;height:15px"><svg width="12" height="13"><path d="M2.5 5.0 L6.0 8.5 L9.5 5.0" fill="none" stroke="#1b5c9c" stroke-width="2"/></svg></div>
<div class="btn dd" style="left:1119px;top:228px;width:14px;height:15px"><svg width="12" height="13"><path d="M2.5 5.0 L6.0 8.5 L9.5 5.0" fill="none" stroke="#1b5c9c" stroke-width="2"/></svg></div>
<div class="t" style="left:1140px;top:230px;width:91px;text-align:left;">Job - New</div>
<div class="btn el" style="left:1230px;top:228px;width:14px;height:15px"><div style="left:2px;top:6px;width:2px;height:2px;background:#1b5c9c"></div><div style="left:5px;top:6px;width:2px;height:2px;background:#1b5c9c"></div><div style="left:8px;top:6px;width:2px;height:2px;background:#1b5c9c"></div></div>
<div class="t" style="left:1251px;top:230px;width:71px;text-align:left;">OUTWORK</div>
<div class="t" style="left:1326px;top:230px;width:97px;text-align:right;font-size:11px;">R8 013,85</div>
<div class="t" style="left:1428px;top:230px;width:76px;text-align:right;font-size:11px;">6</div>
<div class="t" style="left:1509px;top:230px;width:69px;text-align:right;font-size:11px;">0</div>
<div class="t" style="left:1583px;top:230px;width:73px;text-align:right;font-size:11px;">6</div>
<div class="t" style="left:1661px;top:230px;width:70px;text-align:right;font-size:11px;">1 335.642000</div>
<div class="t" style="left:1736px;top:230px;width:70px;text-align:right;font-size:11px;">9215.9298</div>
<div class="t" style="left:1813px;top:230px;width:59px;text-align:left;">Michael</div>
<div class="ind" style="left:12px;top:247px;width:13px;height:20px;border:1px solid #fff;border-bottom-color:#d8d8d8"></div>
<div style="left:12px;top:267px;width:13px;height:1px;background:#a4a4a4"></div>
<div style="left:25px;top:267px;width:1863px;height:1px;background:#e4e4e4"></div>
<div class="t" style="left:27px;top:251px;width:58px;text-align:right;font-size:11px;">1347</div>
<div class="t" style="left:92px;top:251px;width:140px;text-align:left;">Dolphin Worxs Systems</div>
<div class="btn el" style="left:231px;top:249px;width:14px;height:15px"><div style="left:2px;top:6px;width:2px;height:2px;background:#1b5c9c"></div><div style="left:5px;top:6px;width:2px;height:2px;background:#1b5c9c"></div><div style="left:8px;top:6px;width:2px;height:2px;background:#1b5c9c"></div></div>
<div class="t" style="left:328px;top:249px;width:234px;text-align:left;">Invoice Books</div>
<div class="t" style="left:570px;top:249px;width:127px;text-align:left;">Pack in 2's</div>
<div class="t" style="left:702px;top:251px;width:46px;text-align:right;font-size:11px;">10</div>
<div class="t" style="left:755px;top:251px;width:70px;text-align:left;font-size:11px;">2024/08/06</div>
<div class="btn dd" style="left:824px;top:249px;width:14px;height:15px"><svg width="12" height="13"><path d="M2.5 5.0 L6.0 8.5 L9.5 5.0" fill="none" stroke="#1b5c9c" stroke-width="2"/></svg></div>
<div class="btn dd" style="left:937px;top:249px;width:14px;height:15px"><svg width="12" height="13"><path d="M2.5 5.0 L6.0 8.5 L9.5 5.0" fill="none" stroke="#1b5c9c" stroke-width="2"/></svg></div>
<div class="btn dd" style="left:1028px;top:249px;width:14px;height:15px"><svg width="12" height="13"><path d="M2.5 5.0 L6.0 8.5 L9.5 5.0" fill="none" stroke="#1b5c9c" stroke-width="2"/></svg></div>
<div class="btn dd" style="left:1119px;top:249px;width:14px;height:15px"><svg width="12" height="13"><path d="M2.5 5.0 L6.0 8.5 L9.5 5.0" fill="none" stroke="#1b5c9c" stroke-width="2"/></svg></div>
<div class="t" style="left:1140px;top:251px;width:91px;text-align:left;">Job - New</div>
<div class="btn el" style="left:1230px;top:249px;width:14px;height:15px"><div style="left:2px;top:6px;width:2px;height:2px;background:#1b5c9c"></div><div style="left:5px;top:6px;width:2px;height:2px;background:#1b5c9c"></div><div style="left:8px;top:6px;width:2px;height:2px;background:#1b5c9c"></div></div>
<div class="t" style="left:1251px;top:251px;width:71px;text-align:left;">OUTWORK</div>
<div class="t" style="left:1326px;top:251px;width:97px;text-align:right;font-size:11px;">R1 866,32</div>
<div class="t" style="left:1428px;top:251px;width:76px;text-align:right;font-size:11px;">10</div>
<div class="t" style="left:1509px;top:251px;width:69px;text-align:right;font-size:11px;">0</div>
<div class="t" style="left:1583px;top:251px;width:73px;text-align:right;font-size:11px;">10</div>
<div class="t" style="left:1661px;top:251px;width:70px;text-align:right;font-size:11px;">186.632000</div>
<div class="t" style="left:1736px;top:251px;width:70px;text-align:right;font-size:11px;">2146.268</div>
<div class="t" style="left:1813px;top:251px;width:59px;text-align:left;">Michael</div>
<div class="ind" style="left:12px;top:268px;width:13px;height:20px;border:1px solid #fff;border-bottom-color:#d8d8d8"></div>
<div style="left:12px;top:288px;width:13px;height:1px;background:#a4a4a4"></div>
<div style="left:25px;top:288px;width:1863px;height:1px;background:#e4e4e4"></div>
<div class="t" style="left:27px;top:272px;width:58px;text-align:right;font-size:11px;">1346</div>
<div class="t" style="left:92px;top:272px;width:140px;text-align:left;">Kenzo Print</div>
<div class="btn el" style="left:231px;top:270px;width:14px;height:15px"><div style="left:2px;top:6px;width:2px;height:2px;background:#1b5c9c"></div><div style="left:5px;top:6px;width:2px;height:2px;background:#1b5c9c"></div><div style="left:8px;top:6px;width:2px;height:2px;background:#1b5c9c"></div></div>
<div class="t" style="left:252px;top:272px;width:69px;text-align:left;font-size:11px;">15421</div>
<div class="t" style="left:328px;top:270px;width:234px;text-align:left;">A1 Posters</div>
<div class="t" style="left:570px;top:270px;width:127px;text-align:left;">Pack in 100's</div>
<div class="t" style="left:702px;top:272px;width:46px;text-align:right;font-size:11px;">10 000</div>
<div class="t" style="left:755px;top:272px;width:70px;text-align:left;font-size:11px;">2024/08/06</div>
<div class="btn dd" style="left:824px;top:270px;width:14px;height:15px"><svg width="12" height="13"><path d="M2.5 5.0 L6.0 8.5 L9.5 5.0" fill="none" stroke="#1b5c9c" stroke-width="2"/></svg></div>
<div class="t" style="left:845px;top:272px;width:93px;text-align:left;font-size:11px;">2024/08/30 00:00</div>
<div class="btn dd" style="left:937px;top:270px;width:14px;height:15px"><svg width="12" height="13"><path d="M2.5 5.0 L6.0 8.5 L9.5 5.0" fill="none" stroke="#1b5c9c" stroke-width="2"/></svg></div>
<div style="left:959px;top:273px;width:11px;height:11px;border-radius:50%;background:radial-gradient(circle at 50% 35%,#98e07c 0%,#52b542 50%,#2f8d28 100%)"></div>
<div class="t" style="left:978px;top:272px;width:60px;text-align:left;">Complete</div>
<div class="btn dd" style="left:1028px;top:270px;width:14px;height:15px"><svg width="12" height="13"><path d="M2.5 5.0 L6.0 8.5 L9.5 5.0" fill="none" stroke="#1b5c9c" stroke-width="2"/></svg></div>
<div style="left:1050px;top:273px;width:11px;height:11px;border-radius:50%;background:radial-gradient(circle at 50% 35%,#98e07c 0%,#52b542 50%,#2f8d28 100%)"></div>
<div class="t" style="left:1069px;top:272px;width:60px;text-align:left;">Complete</div>
<div class="btn dd" style="left:1119px;top:270px;width:14px;height:15px"><svg width="12" height="13"><path d="M2.5 5.0 L6.0 8.5 L9.5 5.0" fill="none" stroke="#1b5c9c" stroke-width="2"/></svg></div>
<div class="t" style="left:1140px;top:272px;width:91px;text-align:left;">Job - New</div>
<div class="btn el" style="left:1230px;top:270px;width:14px;height:15px"><div style="left:2px;top:6px;width:2px;height:2px;background:#1b5c9c"></div><div style="left:5px;top:6px;width:2px;height:2px;background:#1b5c9c"></div><div style="left:8px;top:6px;width:2px;height:2px;background:#1b5c9c"></div></div>
<div class="t" style="left:1251px;top:272px;width:71px;text-align:left;">LITHO</div>
<div class="t" style="left:1326px;top:272px;width:97px;text-align:right;font-size:11px;">R49 930,00</div>
<div class="t" style="left:1428px;top:272px;width:76px;text-align:right;font-size:11px;">-500</div>
<div class="t" style="left:1509px;top:272px;width:69px;text-align:right;font-size:11px;">10500</div>
<div class="t" style="left:1583px;top:272px;width:73px;text-align:right;font-size:11px;">0</div>
<div class="t" style="left:1661px;top:272px;width:70px;text-align:right;font-size:11px;">4.993000</div>
<div class="t" style="left:1736px;top:272px;width:70px;text-align:right;font-size:11px;">57419.5</div>
<div class="t" style="left:1813px;top:272px;width:59px;text-align:left;">Michael</div>
<div class="ind" style="left:12px;top:289px;width:13px;height:20px;border:1px solid #fff;border-bottom-color:#d8d8d8"></div>
<div style="left:12px;top:309px;width:13px;height:1px;background:#a4a4a4"></div>
<div style="left:25px;top:309px;width:1863px;height:1px;background:#e4e4e4"></div>
<div class="t" style="left:27px;top:293px;width:58px;text-align:right;font-size:11px;">1345</div>
<div class="t" style="left:92px;top:293px;width:140px;text-align:left;">Kenzo Print</div>
<div class="btn el" style="left:231px;top:291px;width:14px;height:15px"><div style="left:2px;top:6px;width:2px;height:2px;background:#1b5c9c"></div><div style="left:5px;top:6px;width:2px;height:2px;background:#1b5c9c"></div><div style="left:8px;top:6px;width:2px;height:2px;background:#1b5c9c"></div></div>
<div class="t" style="left:252px;top:293px;width:69px;text-align:left;font-size:11px;">124652</div>
<div class="t" style="left:328px;top:291px;width:234px;text-align:left;">Flyers</div>
<div class="t" style="left:570px;top:291px;width:127px;text-align:left;">Pack in 100's</div>
<div class="t" style="left:702px;top:293px;width:46px;text-align:right;font-size:11px;">250</div>
<div class="t" style="left:755px;top:293px;width:70px;text-align:left;font-size:11px;">2024/07/30</div>
<div class="btn dd" style="left:824px;top:291px;width:14px;height:15px"><svg width="12" height="13"><path d="M2.5 5.0 L6.0 8.5 L9.5 5.0" fill="none" stroke="#1b5c9c" stroke-width="2"/></svg></div>
<div class="t" style="left:845px;top:293px;width:93px;text-align:left;font-size:11px;">2024/08/23 00:00</div>
<div class="btn dd" style="left:937px;top:291px;width:14px;height:15px"><svg width="12" height="13"><path d="M2.5 5.0 L6.0 8.5 L9.5 5.0" fill="none" stroke="#1b5c9c" stroke-width="2"/></svg></div>
<div style="left:959px;top:294px;width:11px;height:11px;border-radius:50%;background:radial-gradient(circle at 50% 35%,#98e07c 0%,#52b542 50%,#2f8d28 100%)"></div>
<div class="t" style="left:978px;top:293px;width:60px;text-align:left;">Complete</div>
<div class="btn dd" style="left:1028px;top:291px;width:14px;height:15px"><svg width="12" height="13"><path d="M2.5 5.0 L6.0 8.5 L9.5 5.0" fill="none" stroke="#1b5c9c" stroke-width="2"/></svg></div>
<div style="left:1050px;top:294px;width:11px;height:11px;border-radius:50%;background:radial-gradient(circle at 50% 35%,#98e07c 0%,#52b542 50%,#2f8d28 100%)"></div>
<div class="t" style="left:1069px;top:293px;width:60px;text-align:left;">Complete</div>
<div class="btn dd" style="left:1119px;top:291px;width:14px;height:15px"><svg width="12" height="13"><path d="M2.5 5.0 L6.0 8.5 L9.5 5.0" fill="none" stroke="#1b5c9c" stroke-width="2"/></svg></div>
<div class="t" style="left:1140px;top:293px;width:91px;text-align:left;">Job - New</div>
<div class="btn el" style="left:1230px;top:291px;width:14px;height:15px"><div style="left:2px;top:6px;width:2px;height:2px;background:#1b5c9c"></div><div style="left:5px;top:6px;width:2px;height:2px;background:#1b5c9c"></div><div style="left:8px;top:6px;width:2px;height:2px;background:#1b5c9c"></div></div>
<div class="t" style="left:1251px;top:293px;width:71px;text-align:left;">DIGITAL</div>
<div class="t" style="left:1326px;top:293px;width:97px;text-align:right;font-size:11px;">R2 095,00</div>
<div class="t" style="left:1428px;top:293px;width:76px;text-align:right;font-size:11px;">0</div>
<div class="t" style="left:1509px;top:293px;width:69px;text-align:right;font-size:11px;">250</div>
<div class="t" style="left:1583px;top:293px;width:73px;text-align:right;font-size:11px;">0</div>
<div class="t" style="left:1661px;top:293px;width:70px;text-align:right;font-size:11px;">8.380000</div>
<div class="t" style="left:1736px;top:293px;width:70px;text-align:right;font-size:11px;">2409.25</div>
<div class="t" style="left:1813px;top:293px;width:59px;text-align:left;">Michael</div>
<div class="ind" style="left:12px;top:310px;width:13px;height:20px;border:1px solid #fff;border-bottom-color:#d8d8d8"></div>
<div style="left:12px;top:330px;width:13px;height:1px;background:#a4a4a4"></div>
<div style="left:25px;top:330px;width:1863px;height:1px;background:#e4e4e4"></div>
<div class="t" style="left:27px;top:314px;width:58px;text-align:right;font-size:11px;">1344</div>
<div class="t" style="left:92px;top:314px;width:140px;text-align:left;">Momentum Print Agency</div>
<div class="btn el" style="left:231px;top:312px;width:14px;height:15px"><div style="left:2px;top:6px;width:2px;height:2px;background:#1b5c9c"></div><div style="left:5px;top:6px;width:2px;height:2px;background:#1b5c9c"></div><div style="left:8px;top:6px;width:2px;height:2px;background:#1b5c9c"></div></div>
<div class="t" style="left:252px;top:314px;width:69px;text-align:left;font-size:11px;">52152</div>
<div class="t" style="left:328px;top:312px;width:234px;text-align:left;">Momentum Magazine</div>
<div class="t" style="left:570px;top:312px;width:127px;text-align:left;">Pack in 250's</div>
<div class="t" style="left:702px;top:314px;width:46px;text-align:right;font-size:11px;">25 000</div>
<div class="t" style="left:755px;top:314px;width:70px;text-align:left;font-size:11px;">2024/07/23</div>
<div class="btn dd" style="left:824px;top:312px;width:14px;height:15px"><svg width="12" height="13"><path d="M2.5 5.0 L6.0 8.5 L9.5 5.0" fill="none" stroke="#1b5c9c" stroke-width="2"/></svg></div>
<div class="t" style="left:845px;top:314px;width:93px;text-align:left;font-size:11px;">2024/09/10 00:00</div>
<div class="btn dd" style="left:937px;top:312px;width:14px;height:15px"><svg width="12" height="13"><path d="M2.5 5.0 L6.0 8.5 L9.5 5.0" fill="none" stroke="#1b5c9c" stroke-width="2"/></svg></div>
<div style="left:959px;top:315px;width:11px;height:11px;border-radius:50%;background:radial-gradient(circle at 50% 35%,#98e07c 0%,#52b542 50%,#2f8d28 100%)"></div>
<div class="t" style="left:978px;top:314px;width:60px;text-align:left;">Complete</div>
<div class="btn dd" style="left:1028px;top:312px;width:14px;height:15px"><svg width="12" height="13"><path d="M2.5 5.0 L6.0 8.5 L9.5 5.0" fill="none" stroke="#1b5c9c" stroke-width="2"/></svg></div>
<div style="left:1050px;top:315px;width:11px;height:11px;border-radius:50%;background:radial-gradient(circle at 50% 35%,#98e07c 0%,#52b542 50%,#2f8d28 100%)"></div>
<div class="t" style="left:1069px;top:314px;width:60px;text-align:left;">Complete</div>
<div class="btn dd" style="left:1119px;top:312px;width:14px;height:15px"><svg width="12" height="13"><path d="M2.5 5.0 L6.0 8.5 L9.5 5.0" fill="none" stroke="#1b5c9c" stroke-width="2"/></svg></div>
<div class="t" style="left:1140px;top:314px;width:91px;text-align:left;">Job - New</div>
<div class="btn el" style="left:1230px;top:312px;width:14px;height:15px"><div style="left:2px;top:6px;width:2px;height:2px;background:#1b5c9c"></div><div style="left:5px;top:6px;width:2px;height:2px;background:#1b5c9c"></div><div style="left:8px;top:6px;width:2px;height:2px;background:#1b5c9c"></div></div>
<div class="t" style="left:1251px;top:314px;width:71px;text-align:left;">LITHO</div>
<div class="t" style="left:1326px;top:314px;width:97px;text-align:right;font-size:11px;">R185 775,00</div>
<div class="t" style="left:1428px;top:314px;width:76px;text-align:right;font-size:11px;">0</div>
<div class="t" style="left:1509px;top:314px;width:69px;text-align:right;font-size:11px;">25000</div>
<div class="t" style="left:1583px;top:314px;width:73px;text-align:right;font-size:11px;">0</div>
<div class="t" style="left:1661px;top:314px;width:70px;text-align:right;font-size:11px;">7.431000</div>
<div class="t" style="left:1736px;top:314px;width:70px;text-align:right;font-size:11px;">213641.25</div>
<div class="t" style="left:1813px;top:314px;width:59px;text-align:left;">Michael</div>
<div class="ind" style="left:12px;top:331px;width:13px;height:20px;border:1px solid #fff;border-bottom-color:#d8d8d8"></div>
<div style="left:12px;top:351px;width:13px;height:1px;background:#a4a4a4"></div>
<div style="left:25px;top:351px;width:1863px;height:1px;background:#e4e4e4"></div>
<div class="t" style="left:27px;top:335px;width:58px;text-align:right;font-size:11px;">1343</div>
<div class="t" style="left:92px;top:335px;width:140px;text-align:left;">T Print</div>
<div class="btn el" style="left:231px;top:333px;width:14px;height:15px"><div style="left:2px;top:6px;width:2px;height:2px;background:#1b5c9c"></div><div style="left:5px;top:6px;width:2px;height:2px;background:#1b5c9c"></div><div style="left:8px;top:6px;width:2px;height:2px;background:#1b5c9c"></div></div>
<div class="t" style="left:252px;top:335px;width:69px;text-align:left;font-size:11px;">15245</div>
<div class="t" style="left:328px;top:333px;width:234px;text-align:left;">Spar Posters</div>
<div class="t" style="left:570px;top:333px;width:127px;text-align:left;">Pack in 100's</div>
<div class="t" style="left:702px;top:335px;width:46px;text-align:right;font-size:11px;">10 000</div>
<div class="t" style="left:755px;top:335px;width:70px;text-align:left;font-size:11px;">2024/07/05</div>
<div class="btn dd" style="left:824px;top:333px;width:14px;height:15px"><svg width="12" height="13"><path d="M2.5 5.0 L6.0 8.5 L9.5 5.0" fill="none" stroke="#1b5c9c" stroke-width="2"/></svg></div>
<div class="t" style="left:845px;top:335px;width:93px;text-align:left;font-size:11px;">2024/07/16 00:00</div>
<div class="btn dd" style="left:937px;top:333px;width:14px;height:15px"><svg width="12" height="13"><path d="M2.5 5.0 L6.0 8.5 L9.5 5.0" fill="none" stroke="#1b5c9c" stroke-width="2"/></svg></div>
<div style="left:959px;top:336px;width:11px;height:11px;border-radius:50%;background:radial-gradient(circle at 50% 35%,#98e07c 0%,#52b542 50%,#2f8d28 100%)"></div>
<div class="t" style="left:978px;top:335px;width:60px;text-align:left;">Complete</div>
<div class="btn dd" style="left:1028px;top:333px;width:14px;height:15px"><svg width="12" height="13"><path d="M2.5 5.0 L6.0 8.5 L9.5 5.0" fill="none" stroke="#1b5c9c" stroke-width="2"/></svg></div>
<div style="left:1050px;top:336px;width:11px;height:11px;border-radius:50%;background:radial-gradient(circle at 50% 35%,#98e07c 0%,#52b542 50%,#2f8d28 100%)"></div>
<div class="t" style="left:1069px;top:335px;width:60px;text-align:left;">Complete</div>
<div class="btn dd" style="left:1119px;top:333px;width:14px;height:15px"><svg width="12" height="13"><path d="M2.5 5.0 L6.0 8.5 L9.5 5.0" fill="none" stroke="#1b5c9c" stroke-width="2"/></svg></div>
<div class="t" style="left:1140px;top:335px;width:91px;text-align:left;">Job - New</div>
<div class="btn el" style="left:1230px;top:333px;width:14px;height:15px"><div style="left:2px;top:6px;width:2px;height:2px;background:#1b5c9c"></div><div style="left:5px;top:6px;width:2px;height:2px;background:#1b5c9c"></div><div style="left:8px;top:6px;width:2px;height:2px;background:#1b5c9c"></div></div>
<div class="t" style="left:1251px;top:335px;width:71px;text-align:left;">LITHO</div>
<div class="t" style="left:1326px;top:335px;width:97px;text-align:right;font-size:11px;">R9 860,00</div>
<div class="t" style="left:1428px;top:335px;width:76px;text-align:right;font-size:11px;">0</div>
<div class="t" style="left:1509px;top:335px;width:69px;text-align:right;font-size:11px;">10000</div>
<div class="t" style="left:1583px;top:335px;width:73px;text-align:right;font-size:11px;">0</div>
<div class="t" style="left:1661px;top:335px;width:70px;text-align:right;font-size:11px;">0.986000</div>
<div class="t" style="left:1736px;top:335px;width:70px;text-align:right;font-size:11px;">11339</div>
<div class="t" style="left:1813px;top:335px;width:59px;text-align:left;">Michael</div>
<div class="ind" style="left:12px;top:352px;width:13px;height:20px;border:1px solid #fff;border-bottom-color:#d8d8d8"></div>
<div style="left:12px;top:372px;width:13px;height:1px;background:#a4a4a4"></div>
<div style="left:25px;top:372px;width:1863px;height:1px;background:#e4e4e4"></div>
<div class="t" style="left:27px;top:356px;width:58px;text-align:right;font-size:11px;">1342</div>
<div class="t" style="left:92px;top:356px;width:140px;text-align:left;">Abcon Group</div>
<div class="btn el" style="left:231px;top:354px;width:14px;height:15px"><div style="left:2px;top:6px;width:2px;height:2px;background:#1b5c9c"></div><div style="left:5px;top:6px;width:2px;height:2px;background:#1b5c9c"></div><div style="left:8px;top:6px;width:2px;height:2px;background:#1b5c9c"></div></div>
<div class="t" style="left:252px;top:356px;width:69px;text-align:left;font-size:11px;">14554</div>
<div class="t" style="left:328px;top:354px;width:234px;text-align:left;">Abcon Magazine</div>
<div class="t" style="left:702px;top:356px;width:46px;text-align:right;font-size:11px;">5 000</div>
<div class="t" style="left:755px;top:356px;width:70px;text-align:left;font-size:11px;">2024/06/26</div>
<div class="btn dd" style="left:824px;top:354px;width:14px;height:15px"><svg width="12" height="13"><path d="M2.5 5.0 L6.0 8.5 L9.5 5.0" fill="none" stroke="#1b5c9c" stroke-width="2"/></svg></div>
<div class="t" style="left:845px;top:356px;width:93px;text-align:left;font-size:11px;">2024/08/12 00:00</div>
<div class="btn dd" style="left:937px;top:354px;width:14px;height:15px"><svg width="12" height="13"><path d="M2.5 5.0 L6.0 8.5 L9.5 5.0" fill="none" stroke="#1b5c9c" stroke-width="2"/></svg></div>
<div class="btn dd" style="left:1028px;top:354px;width:14px;height:15px"><svg width="12" height="13"><path d="M2.5 5.0 L6.0 8.5 L9.5 5.0" fill="none" stroke="#1b5c9c" stroke-width="2"/></svg></div>
<div class="btn dd" style="left:1119px;top:354px;width:14px;height:15px"><svg width="12" height="13"><path d="M2.5 5.0 L6.0 8.5 L9.5 5.0" fill="none" stroke="#1b5c9c" stroke-width="2"/></svg></div>
<div class="t" style="left:1140px;top:356px;width:91px;text-align:left;">Job - New</div>
<div class="btn el" style="left:1230px;top:354px;width:14px;height:15px"><div style="left:2px;top:6px;width:2px;height:2px;background:#1b5c9c"></div><div style="left:5px;top:6px;width:2px;height:2px;background:#1b5c9c"></div><div style="left:8px;top:6px;width:2px;height:2px;background:#1b5c9c"></div></div>
<div class="t" style="left:1251px;top:356px;width:71px;text-align:left;">LITHO</div>
<div class="t" style="left:1326px;top:356px;width:97px;text-align:right;font-size:11px;">R173 750,00</div>
<div class="t" style="left:1428px;top:356px;width:76px;text-align:right;font-size:11px;">5000</div>
<div class="t" style="left:1509px;top:356px;width:69px;text-align:right;font-size:11px;">0</div>
<div class="t" style="left:1583px;top:356px;width:73px;text-align:right;font-size:11px;">5000</div>
<div class="t" style="left:1661px;top:356px;width:70px;text-align:right;font-size:11px;">34.750000</div>
<div class="t" style="left:1736px;top:356px;width:70px;text-align:right;font-size:11px;">199812.5</div>
<div class="t" style="left:1813px;top:356px;width:59px;text-align:left;">Michael</div>
<div class="ind" style="left:12px;top:373px;width:13px;height:20px;border:1px solid #fff;border-bottom-color:#d8d8d8"></div>
<div style="left:12px;top:393px;width:13px;height:1px;background:#a4a4a4"></div>
<div style="left:25px;top:393px;width:1863px;height:1px;background:#e4e4e4"></div>
<div class="t" style="left:27px;top:377px;width:58px;text-align:right;font-size:11px;">1341</div>
<div class="t" style="left:92px;top:377px;width:140px;text-align:left;">Dolphin Worxs Systems</div>
<div class="btn el" style="left:231px;top:375px;width:14px;height:15px"><div style="left:2px;top:6px;width:2px;height:2px;background:#1b5c9c"></div><div style="left:5px;top:6px;width:2px;height:2px;background:#1b5c9c"></div><div style="left:8px;top:6px;width:2px;height:2px;background:#1b5c9c"></div></div>
<div class="t" style="left:252px;top:377px;width:69px;text-align:left;font-size:11px;">1245</div>
<div class="t" style="left:328px;top:375px;width:234px;text-align:left;">A4 Flyers</div>
<div class="t" style="left:570px;top:375px;width:127px;text-align:left;">Pack in 100's</div>
<div class="t" style="left:702px;top:377px;width:46px;text-align:right;font-size:11px;">200</div>
<div class="t" style="left:755px;top:377px;width:70px;text-align:left;font-size:11px;">2024/06/10</div>
<div class="btn dd" style="left:824px;top:375px;width:14px;height:15px"><svg width="12" height="13"><path d="M2.5 5.0 L6.0 8.5 L9.5 5.0" fill="none" stroke="#1b5c9c" stroke-width="2"/></svg></div>
<div class="t" style="left:845px;top:377px;width:93px;text-align:left;font-size:11px;">2024/06/18 00:00</div>
<div class="btn dd" style="left:937px;top:375px;width:14px;height:15px"><svg width="12" height="13"><path d="M2.5 5.0 L6.0 8.5 L9.5 5.0" fill="none" stroke="#1b5c9c" stroke-width="2"/></svg></div>
<div class="btn dd" style="left:1028px;top:375px;width:14px;height:15px"><svg width="12" height="13"><path d="M2.5 5.0 L6.0 8.5 L9.5 5.0" fill="none" stroke="#1b5c9c" stroke-width="2"/></svg></div>
<div style="left:1050px;top:378px;width:11px;height:11px;border-radius:50%;background:radial-gradient(circle at 50% 35%,#98e07c 0%,#52b542 50%,#2f8d28 100%)"></div>
<div class="t" style="left:1069px;top:377px;width:60px;text-align:left;">Complete</div>
<div class="btn dd" style="left:1119px;top:375px;width:14px;height:15px"><svg width="12" height="13"><path d="M2.5 5.0 L6.0 8.5 L9.5 5.0" fill="none" stroke="#1b5c9c" stroke-width="2"/></svg></div>
<div class="t" style="left:1140px;top:377px;width:91px;text-align:left;">Job - New</div>
<div class="btn el" style="left:1230px;top:375px;width:14px;height:15px"><div style="left:2px;top:6px;width:2px;height:2px;background:#1b5c9c"></div><div style="left:5px;top:6px;width:2px;height:2px;background:#1b5c9c"></div><div style="left:8px;top:6px;width:2px;height:2px;background:#1b5c9c"></div></div>
<div class="t" style="left:1251px;top:377px;width:71px;text-align:left;">DIGITAL</div>
<div class="t" style="left:1326px;top:377px;width:97px;text-align:right;font-size:11px;">R1 007,60</div>
<div class="t" style="left:1428px;top:377px;width:76px;text-align:right;font-size:11px;">0</div>
<div class="t" style="left:1509px;top:377px;width:69px;text-align:right;font-size:11px;">200</div>
<div class="t" style="left:1583px;top:377px;width:73px;text-align:right;font-size:11px;">200</div>
<div class="t" style="left:1661px;top:377px;width:70px;text-align:right;font-size:11px;">5.038000</div>
<div class="t" style="left:1736px;top:377px;width:70px;text-align:right;font-size:11px;">1158.74</div>
<div class="t" style="left:1813px;top:377px;width:59px;text-align:left;">Michael</div>
<div class="ind" style="left:12px;top:394px;width:13px;height:20px;border:1px solid #fff;border-bottom-color:#d8d8d8"></div>
<div style="left:12px;top:414px;width:13px;height:1px;background:#a4a4a4"></div>
<div style="left:25px;top:414px;width:1863px;height:1px;background:#e4e4e4"></div>
<div class="t" style="left:27px;top:398px;width:58px;text-align:right;font-size:11px;">1340</div>
<div class="t" style="left:92px;top:398px;width:140px;text-align:left;">Abcon Group</div>
<div class="btn el" style="left:231px;top:396px;width:14px;height:15px"><div style="left:2px;top:6px;width:2px;height:2px;background:#1b5c9c"></div><div style="left:5px;top:6px;width:2px;height:2px;background:#1b5c9c"></div><div style="left:8px;top:6px;width:2px;height:2px;background:#1b5c9c"></div></div>
<div class="t" style="left:252px;top:398px;width:69px;text-align:left;font-size:11px;">12578</div>
<div class="t" style="left:328px;top:396px;width:234px;text-align:left;">Printed in full colour</div>
<div class="t" style="left:570px;top:396px;width:127px;text-align:left;">pack in 100's</div>
<div class="t" style="left:702px;top:398px;width:46px;text-align:right;font-size:11px;">500</div>
<div class="t" style="left:755px;top:398px;width:70px;text-align:left;font-size:11px;">2024/05/28</div>
<div class="btn dd" style="left:824px;top:396px;width:14px;height:15px"><svg width="12" height="13"><path d="M2.5 5.0 L6.0 8.5 L9.5 5.0" fill="none" stroke="#1b5c9c" stroke-width="2"/></svg></div>
<div class="t" style="left:845px;top:398px;width:93px;text-align:left;font-size:11px;">2024/06/21 00:00</div>
<div class="btn dd" style="left:937px;top:396px;width:14px;height:15px"><svg width="12" height="13"><path d="M2.5 5.0 L6.0 8.5 L9.5 5.0" fill="none" stroke="#1b5c9c" stroke-width="2"/></svg></div>
<div class="btn dd" style="left:1028px;top:396px;width:14px;height:15px"><svg width="12" height="13"><path d="M2.5 5.0 L6.0 8.5 L9.5 5.0" fill="none" stroke="#1b5c9c" stroke-width="2"/></svg></div>
<div class="btn dd" style="left:1119px;top:396px;width:14px;height:15px"><svg width="12" height="13"><path d="M2.5 5.0 L6.0 8.5 L9.5 5.0" fill="none" stroke="#1b5c9c" stroke-width="2"/></svg></div>
<div class="t" style="left:1140px;top:398px;width:91px;text-align:left;">Job - New</div>
<div class="btn el" style="left:1230px;top:396px;width:14px;height:15px"><div style="left:2px;top:6px;width:2px;height:2px;background:#1b5c9c"></div><div style="left:5px;top:6px;width:2px;height:2px;background:#1b5c9c"></div><div style="left:8px;top:6px;width:2px;height:2px;background:#1b5c9c"></div></div>
<div class="t" style="left:1251px;top:398px;width:71px;text-align:left;">DIGITAL</div>
<div class="t" style="left:1326px;top:398px;width:97px;text-align:right;font-size:11px;">R3 141,00</div>
<div class="t" style="left:1428px;top:398px;width:76px;text-align:right;font-size:11px;">500</div>
<div class="t" style="left:1509px;top:398px;width:69px;text-align:right;font-size:11px;">0</div>
<div class="t" style="left:1583px;top:398px;width:73px;text-align:right;font-size:11px;">500</div>
<div class="t" style="left:1661px;top:398px;width:70px;text-align:right;font-size:11px;">6.282000</div>
<div class="t" style="left:1736px;top:398px;width:70px;text-align:right;font-size:11px;">3612.15</div>
<div class="t" style="left:1813px;top:398px;width:59px;text-align:left;">Michael</div>
<div class="ind" style="left:12px;top:415px;width:13px;height:20px;border:1px solid #fff;border-bottom-color:#d8d8d8"></div>
<div style="left:12px;top:435px;width:13px;height:1px;background:#a4a4a4"></div>
<div style="left:25px;top:435px;width:1863px;height:1px;background:#e4e4e4"></div>
<div class="t" style="left:27px;top:419px;width:58px;text-align:right;font-size:11px;">1339</div>
<div class="t" style="left:92px;top:419px;width:140px;text-align:left;">Dolphin Worxs Systems</div>
<div class="btn el" style="left:231px;top:417px;width:14px;height:15px"><div style="left:2px;top:6px;width:2px;height:2px;background:#1b5c9c"></div><div style="left:5px;top:6px;width:2px;height:2px;background:#1b5c9c"></div><div style="left:8px;top:6px;width:2px;height:2px;background:#1b5c9c"></div></div>
<div class="t" style="left:252px;top:419px;width:69px;text-align:left;font-size:11px;">5152</div>
<div class="t" style="left:328px;top:417px;width:234px;text-align:left;">Flyers</div>
<div class="t" style="left:570px;top:417px;width:127px;text-align:left;">Pack in 100's</div>
<div class="t" style="left:702px;top:419px;width:46px;text-align:right;font-size:11px;">200</div>
<div class="t" style="left:755px;top:419px;width:70px;text-align:left;font-size:11px;">2024/05/24</div>
<div class="btn dd" style="left:824px;top:417px;width:14px;height:15px"><svg width="12" height="13"><path d="M2.5 5.0 L6.0 8.5 L9.5 5.0" fill="none" stroke="#1b5c9c" stroke-width="2"/></svg></div>
<div class="t" style="left:845px;top:419px;width:93px;text-align:left;font-size:11px;">2024/06/11 00:00</div>
<div class="btn dd" style="left:937px;top:417px;width:14px;height:15px"><svg width="12" height="13"><path d="M2.5 5.0 L6.0 8.5 L9.5 5.0" fill="none" stroke="#1b5c9c" stroke-width="2"/></svg></div>
<div class="btn dd" style="left:1028px;top:417px;width:14px;height:15px"><svg width="12" height="13"><path d="M2.5 5.0 L6.0 8.5 L9.5 5.0" fill="none" stroke="#1b5c9c" stroke-width="2"/></svg></div>
<div class="btn dd" style="left:1119px;top:417px;width:14px;height:15px"><svg width="12" height="13"><path d="M2.5 5.0 L6.0 8.5 L9.5 5.0" fill="none" stroke="#1b5c9c" stroke-width="2"/></svg></div>
<div class="t" style="left:1140px;top:419px;width:91px;text-align:left;">Job - New</div>
<div class="btn el" style="left:1230px;top:417px;width:14px;height:15px"><div style="left:2px;top:6px;width:2px;height:2px;background:#1b5c9c"></div><div style="left:5px;top:6px;width:2px;height:2px;background:#1b5c9c"></div><div style="left:8px;top:6px;width:2px;height:2px;background:#1b5c9c"></div></div>
<div class="t" style="left:1251px;top:419px;width:71px;text-align:left;">DIGITAL</div>
<div class="t" style="left:1326px;top:419px;width:97px;text-align:right;font-size:11px;">R973,20</div>
<div class="t" style="left:1428px;top:419px;width:76px;text-align:right;font-size:11px;">200</div>
<div class="t" style="left:1509px;top:419px;width:69px;text-align:right;font-size:11px;">0</div>
<div class="t" style="left:1583px;top:419px;width:73px;text-align:right;font-size:11px;">200</div>
<div class="t" style="left:1661px;top:419px;width:70px;text-align:right;font-size:11px;">4.866000</div>
<div class="t" style="left:1736px;top:419px;width:70px;text-align:right;font-size:11px;">1119.18</div>
<div class="t" style="left:1813px;top:419px;width:59px;text-align:left;">Michael</div>
<div class="ind" style="left:12px;top:436px;width:13px;height:20px;border:1px solid #fff;border-bottom-color:#d8d8d8"></div>
<div style="left:12px;top:456px;width:13px;height:1px;background:#a4a4a4"></div>
<div style="left:25px;top:456px;width:1863px;height:1px;background:#e4e4e4"></div>
<div class="t" style="left:27px;top:440px;width:58px;text-align:right;font-size:11px;">1338</div>
<div class="t" style="left:92px;top:440px;width:140px;text-align:left;">Dolphin Worxs Systems</div>
<div class="btn el" style="left:231px;top:438px;width:14px;height:15px"><div style="left:2px;top:6px;width:2px;height:2px;background:#1b5c9c"></div><div style="left:5px;top:6px;width:2px;height:2px;background:#1b5c9c"></div><div style="left:8px;top:6px;width:2px;height:2px;background:#1b5c9c"></div></div>
<div class="t" style="left:252px;top:440px;width:69px;text-align:left;font-size:11px;">256455</div>
<div class="t" style="left:328px;top:438px;width:234px;text-align:left;">A1 Posters</div>
<div class="t" style="left:570px;top:438px;width:127px;text-align:left;">Pack in 100's</div>
<div class="t" style="left:702px;top:440px;width:46px;text-align:right;font-size:11px;">5 000</div>
<div class="t" style="left:755px;top:440px;width:70px;text-align:left;font-size:11px;">2024/05/16</div>
<div class="btn dd" style="left:824px;top:438px;width:14px;height:15px"><svg width="12" height="13"><path d="M2.5 5.0 L6.0 8.5 L9.5 5.0" fill="none" stroke="#1b5c9c" stroke-width="2"/></svg></div>
<div class="t" style="left:845px;top:440px;width:93px;text-align:left;font-size:11px;">2024/05/22 00:00</div>
<div class="btn dd" style="left:937px;top:438px;width:14px;height:15px"><svg width="12" height="13"><path d="M2.5 5.0 L6.0 8.5 L9.5 5.0" fill="none" stroke="#1b5c9c" stroke-width="2"/></svg></div>
<div class="btn dd" style="left:1028px;top:438px;width:14px;height:15px"><svg width="12" height="13"><path d="M2.5 5.0 L6.0 8.5 L9.5 5.0" fill="none" stroke="#1b5c9c" stroke-width="2"/></svg></div>
<div class="btn dd" style="left:1119px;top:438px;width:14px;height:15px"><svg width="12" height="13"><path d="M2.5 5.0 L6.0 8.5 L9.5 5.0" fill="none" stroke="#1b5c9c" stroke-width="2"/></svg></div>
<div class="t" style="left:1140px;top:440px;width:91px;text-align:left;">Job - New</div>
<div class="btn el" style="left:1230px;top:438px;width:14px;height:15px"><div style="left:2px;top:6px;width:2px;height:2px;background:#1b5c9c"></div><div style="left:5px;top:6px;width:2px;height:2px;background:#1b5c9c"></div><div style="left:8px;top:6px;width:2px;height:2px;background:#1b5c9c"></div></div>
<div class="t" style="left:1251px;top:440px;width:71px;text-align:left;">LITHO</div>
<div class="t" style="left:1326px;top:440px;width:97px;text-align:right;font-size:11px;">R29 375,00</div>
<div class="t" style="left:1428px;top:440px;width:76px;text-align:right;font-size:11px;">5000</div>
<div class="t" style="left:1509px;top:440px;width:69px;text-align:right;font-size:11px;">0</div>
<div class="t" style="left:1583px;top:440px;width:73px;text-align:right;font-size:11px;">5000</div>
<div class="t" style="left:1661px;top:440px;width:70px;text-align:right;font-size:11px;">5.875000</div>
<div class="t" style="left:1736px;top:440px;width:70px;text-align:right;font-size:11px;">33781.25</div>
<div class="t" style="left:1813px;top:440px;width:59px;text-align:left;">Michael</div>
<div class="ind" style="left:12px;top:457px;width:13px;height:20px;border:1px solid #fff;border-bottom-color:#d8d8d8"></div>
<div style="left:12px;top:477px;width:13px;height:1px;background:#a4a4a4"></div>
<div style="left:25px;top:477px;width:1863px;height:1px;background:#e4e4e4"></div>
<div class="t" style="left:27px;top:461px;width:58px;text-align:right;font-size:11px;">1337</div>
<div class="t" style="left:92px;top:461px;width:140px;text-align:left;">Dolphin Worxs Systems</div>
<div class="btn el" style="left:231px;top:459px;width:14px;height:15px"><div style="left:2px;top:6px;width:2px;height:2px;background:#1b5c9c"></div><div style="left:5px;top:6px;width:2px;height:2px;background:#1b5c9c"></div><div style="left:8px;top:6px;width:2px;height:2px;background:#1b5c9c"></div></div>
<div class="t" style="left:252px;top:461px;width:69px;text-align:left;font-size:11px;">2548</div>
<div class="t" style="left:328px;top:459px;width:234px;text-align:left;">Leaflets</div>
<div class="t" style="left:570px;top:459px;width:127px;text-align:left;">Pack in 100's</div>
<div class="t" style="left:702px;top:461px;width:46px;text-align:right;font-size:11px;">100</div>
<div class="t" style="left:755px;top:461px;width:70px;text-align:left;font-size:11px;">2024/05/14</div>
<div class="btn dd" style="left:824px;top:459px;width:14px;height:15px"><svg width="12" height="13"><path d="M2.5 5.0 L6.0 8.5 L9.5 5.0" fill="none" stroke="#1b5c9c" stroke-width="2"/></svg></div>
<div class="t" style="left:845px;top:461px;width:93px;text-align:left;font-size:11px;">2024/05/31 00:00</div>
<div class="btn dd" style="left:937px;top:459px;width:14px;height:15px"><svg width="12" height="13"><path d="M2.5 5.0 L6.0 8.5 L9.5 5.0" fill="none" stroke="#1b5c9c" stroke-width="2"/></svg></div>
<div class="btn dd" style="left:1028px;top:459px;width:14px;height:15px"><svg width="12" height="13"><path d="M2.5 5.0 L6.0 8.5 L9.5 5.0" fill="none" stroke="#1b5c9c" stroke-width="2"/></svg></div>
<div class="btn dd" style="left:1119px;top:459px;width:14px;height:15px"><svg width="12" height="13"><path d="M2.5 5.0 L6.0 8.5 L9.5 5.0" fill="none" stroke="#1b5c9c" stroke-width="2"/></svg></div>
<div class="t" style="left:1140px;top:461px;width:91px;text-align:left;">Job - New</div>
<div class="btn el" style="left:1230px;top:459px;width:14px;height:15px"><div style="left:2px;top:6px;width:2px;height:2px;background:#1b5c9c"></div><div style="left:5px;top:6px;width:2px;height:2px;background:#1b5c9c"></div><div style="left:8px;top:6px;width:2px;height:2px;background:#1b5c9c"></div></div>
<div class="t" style="left:1251px;top:461px;width:71px;text-align:left;">OUTWORK</div>
<div class="t" style="left:1326px;top:461px;width:97px;text-align:right;font-size:11px;">R3 814,30</div>
<div class="t" style="left:1428px;top:461px;width:76px;text-align:right;font-size:11px;">100</div>
<div class="t" style="left:1509px;top:461px;width:69px;text-align:right;font-size:11px;">0</div>
<div class="t" style="left:1583px;top:461px;width:73px;text-align:right;font-size:11px;">100</div>
<div class="t" style="left:1661px;top:461px;width:70px;text-align:right;font-size:11px;">38.143000</div>
<div class="t" style="left:1736px;top:461px;width:70px;text-align:right;font-size:11px;">4386.445</div>
<div class="t" style="left:1813px;top:461px;width:59px;text-align:left;">Michael</div>
<div class="ind" style="left:12px;top:478px;width:13px;height:20px;border:1px solid #fff;border-bottom-color:#d8d8d8"></div>
<div style="left:12px;top:498px;width:13px;height:1px;background:#a4a4a4"></div>
<div style="left:25px;top:498px;width:1863px;height:1px;background:#e4e4e4"></div>
<div class="t" style="left:27px;top:482px;width:58px;text-align:right;font-size:11px;">1336</div>
<div class="t" style="left:92px;top:482px;width:140px;text-align:left;">Dolphin Worxs Systems</div>
<div class="btn el" style="left:231px;top:480px;width:14px;height:15px"><div style="left:2px;top:6px;width:2px;height:2px;background:#1b5c9c"></div><div style="left:5px;top:6px;width:2px;height:2px;background:#1b5c9c"></div><div style="left:8px;top:6px;width:2px;height:2px;background:#1b5c9c"></div></div>
<div class="t" style="left:252px;top:482px;width:69px;text-align:left;font-size:11px;">7855</div>
<div class="t" style="left:328px;top:480px;width:234px;text-align:left;">Magazines</div>
<div class="t" style="left:702px;top:482px;width:46px;text-align:right;font-size:11px;">7 500</div>
<div class="t" style="left:755px;top:482px;width:70px;text-align:left;font-size:11px;">2024/05/13</div>
<div class="btn dd" style="left:824px;top:480px;width:14px;height:15px"><svg width="12" height="13"><path d="M2.5 5.0 L6.0 8.5 L9.5 5.0" fill="none" stroke="#1b5c9c" stroke-width="2"/></svg></div>
<div class="t" style="left:845px;top:482px;width:93px;text-align:left;font-size:11px;">2024/06/06 00:00</div>
<div class="btn dd" style="left:937px;top:480px;width:14px;height:15px"><svg width="12" height="13"><path d="M2.5 5.0 L6.0 8.5 L9.5 5.0" fill="none" stroke="#1b5c9c" stroke-width="2"/></svg></div>
<div style="left:959px;top:483px;width:11px;height:11px;border-radius:50%;background:radial-gradient(circle at 50% 35%,#98e07c 0%,#52b542 50%,#2f8d28 100%)"></div>
<div class="t" style="left:978px;top:482px;width:60px;text-align:left;">Complete</div>
<div class="btn dd" style="left:1028px;top:480px;width:14px;height:15px"><svg width="12" height="13"><path d="M2.5 5.0 L6.0 8.5 L9.5 5.0" fill="none" stroke="#1b5c9c" stroke-width="2"/></svg></div>
<div style="left:1050px;top:483px;width:11px;height:11px;border-radius:50%;background:radial-gradient(circle at 50% 35%,#98e07c 0%,#52b542 50%,#2f8d28 100%)"></div>
<div class="t" style="left:1069px;top:482px;width:60px;text-align:left;">Complete</div>
<div class="btn dd" style="left:1119px;top:480px;width:14px;height:15px"><svg width="12" height="13"><path d="M2.5 5.0 L6.0 8.5 L9.5 5.0" fill="none" stroke="#1b5c9c" stroke-width="2"/></svg></div>
<div class="t" style="left:1140px;top:482px;width:91px;text-align:left;">Job - New</div>
<div class="btn el" style="left:1230px;top:480px;width:14px;height:15px"><div style="left:2px;top:6px;width:2px;height:2px;background:#1b5c9c"></div><div style="left:5px;top:6px;width:2px;height:2px;background:#1b5c9c"></div><div style="left:8px;top:6px;width:2px;height:2px;background:#1b5c9c"></div></div>
<div class="t" style="left:1251px;top:482px;width:71px;text-align:left;">LITHO</div>
<div class="t" style="left:1326px;top:482px;width:97px;text-align:right;font-size:11px;">R58 732,50</div>
<div class="t" style="left:1428px;top:482px;width:76px;text-align:right;font-size:11px;">0</div>
<div class="t" style="left:1509px;top:482px;width:69px;text-align:right;font-size:11px;">7500</div>
<div class="t" style="left:1583px;top:482px;width:73px;text-align:right;font-size:11px;">0</div>
<div class="t" style="left:1661px;top:482px;width:70px;text-align:right;font-size:11px;">7.831000</div>
<div class="t" style="left:1736px;top:482px;width:70px;text-align:right;font-size:11px;">67542.375</div>
<div class="t" style="left:1813px;top:482px;width:59px;text-align:left;">Michael</div>
<div class="ind" style="left:12px;top:499px;width:13px;height:20px;border:1px solid #fff;border-bottom-color:#d8d8d8"></div>
<div style="left:12px;top:519px;width:13px;height:1px;background:#a4a4a4"></div>
<div style="left:25px;top:519px;width:1863px;height:1px;background:#e4e4e4"></div>
<div class="t" style="left:27px;top:503px;width:58px;text-align:right;font-size:11px;">1335</div>
<div class="t" style="left:92px;top:503px;width:140px;text-align:left;">Dolphin Worxs Systems</div>
<div class="btn el" style="left:231px;top:501px;width:14px;height:15px"><div style="left:2px;top:6px;width:2px;height:2px;background:#1b5c9c"></div><div style="left:5px;top:6px;width:2px;height:2px;background:#1b5c9c"></div><div style="left:8px;top:6px;width:2px;height:2px;background:#1b5c9c"></div></div>
<div class="t" style="left:252px;top:503px;width:69px;text-align:left;font-size:11px;">12455</div>
<div class="t" style="left:328px;top:501px;width:234px;text-align:left;">A4 Flyers</div>
<div class="t" style="left:702px;top:503px;width:46px;text-align:right;font-size:11px;">10 000</div>
<div class="t" style="left:755px;top:503px;width:70px;text-align:left;font-size:11px;">2024/05/13</div>
<div class="btn dd" style="left:824px;top:501px;width:14px;height:15px"><svg width="12" height="13"><path d="M2.5 5.0 L6.0 8.5 L9.5 5.0" fill="none" stroke="#1b5c9c" stroke-width="2"/></svg></div>
<div class="t" style="left:845px;top:503px;width:93px;text-align:left;font-size:11px;">2024/05/24 00:00</div>
<div class="btn dd" style="left:937px;top:501px;width:14px;height:15px"><svg width="12" height="13"><path d="M2.5 5.0 L6.0 8.5 L9.5 5.0" fill="none" stroke="#1b5c9c" stroke-width="2"/></svg></div>
<div style="left:959px;top:504px;width:11px;height:11px;border-radius:50%;background:radial-gradient(circle at 50% 35%,#98e07c 0%,#52b542 50%,#2f8d28 100%)"></div>
<div class="t" style="left:978px;top:503px;width:60px;text-align:left;">Complete</div>
<div class="btn dd" style="left:1028px;top:501px;width:14px;height:15px"><svg width="12" height="13"><path d="M2.5 5.0 L6.0 8.5 L9.5 5.0" fill="none" stroke="#1b5c9c" stroke-width="2"/></svg></div>
<div style="left:1050px;top:504px;width:11px;height:11px;border-radius:50%;background:radial-gradient(circle at 50% 35%,#98e07c 0%,#52b542 50%,#2f8d28 100%)"></div>
<div class="t" style="left:1069px;top:503px;width:60px;text-align:left;">Complete</div>
<div class="btn dd" style="left:1119px;top:501px;width:14px;height:15px"><svg width="12" height="13"><path d="M2.5 5.0 L6.0 8.5 L9.5 5.0" fill="none" stroke="#1b5c9c" stroke-width="2"/></svg></div>
<div class="t" style="left:1140px;top:503px;width:91px;text-align:left;">Job - New</div>
<div class="btn el" style="left:1230px;top:501px;width:14px;height:15px"><div style="left:2px;top:6px;width:2px;height:2px;background:#1b5c9c"></div><div style="left:5px;top:6px;width:2px;height:2px;background:#1b5c9c"></div><div style="left:8px;top:6px;width:2px;height:2px;background:#1b5c9c"></div></div>
<div class="t" style="left:1251px;top:503px;width:71px;text-align:left;">LITHO</div>
<div class="t" style="left:1326px;top:503px;width:97px;text-align:right;font-size:11px;">R9 840,00</div>
<div class="t" style="left:1428px;top:503px;width:76px;text-align:right;font-size:11px;">0</div>
<div class="t" style="left:1509px;top:503px;width:69px;text-align:right;font-size:11px;">10000</div>
<div class="t" style="left:1583px;top:503px;width:73px;text-align:right;font-size:11px;">0</div>
<div class="t" style="left:1661px;top:503px;width:70px;text-align:right;font-size:11px;">0.984000</div>
<div class="t" style="left:1736px;top:503px;width:70px;text-align:right;font-size:11px;">11316</div>
<div class="t" style="left:1813px;top:503px;width:59px;text-align:left;">Michael</div>
<div class="ind" style="left:12px;top:520px;width:13px;height:20px;border:1px solid #fff;border-bottom-color:#d8d8d8"></div>
<div style="left:12px;top:540px;width:13px;height:1px;background:#a4a4a4"></div>
<div style="left:25px;top:540px;width:1863px;height:1px;background:#e4e4e4"></div>
<div class="t" style="left:27px;top:524px;width:58px;text-align:right;font-size:11px;">1334</div>
<div class="t" style="left:92px;top:524px;width:140px;text-align:left;">Atom Signs</div>
<div class="btn el" style="left:231px;top:522px;width:14px;height:15px"><div style="left:2px;top:6px;width:2px;height:2px;background:#1b5c9c"></div><div style="left:5px;top:6px;width:2px;height:2px;background:#1b5c9c"></div><div style="left:8px;top:6px;width:2px;height:2px;background:#1b5c9c"></div></div>
<div class="t" style="left:252px;top:524px;width:69px;text-align:left;font-size:11px;">15456</div>
<div class="t" style="left:570px;top:522px;width:127px;text-align:left;">3 different artworks</div>
<div class="t" style="left:702px;top:524px;width:46px;text-align:right;font-size:11px;">10</div>
<div class="t" style="left:755px;top:524px;width:70px;text-align:left;font-size:11px;">2024/05/07</div>
<div class="btn dd" style="left:824px;top:522px;width:14px;height:15px"><svg width="12" height="13"><path d="M2.5 5.0 L6.0 8.5 L9.5 5.0" fill="none" stroke="#1b5c9c" stroke-width="2"/></svg></div>
<div class="t" style="left:845px;top:524px;width:93px;text-align:left;font-size:11px;">2024/05/31 00:00</div>
<div class="btn dd" style="left:937px;top:522px;width:14px;height:15px"><svg width="12" height="13"><path d="M2.5 5.0 L6.0 8.5 L9.5 5.0" fill="none" stroke="#1b5c9c" stroke-width="2"/></svg></div>
<div style="left:959px;top:525px;width:11px;height:11px;border-radius:50%;background:radial-gradient(circle at 50% 35%,#98e07c 0%,#52b542 50%,#2f8d28 100%)"></div>
<div class="t" style="left:978px;top:524px;width:60px;text-align:left;">Complete</div>
<div class="btn dd" style="left:1028px;top:522px;width:14px;height:15px"><svg width="12" height="13"><path d="M2.5 5.0 L6.0 8.5 L9.5 5.0" fill="none" stroke="#1b5c9c" stroke-width="2"/></svg></div>
<div style="left:1050px;top:525px;width:11px;height:11px;border-radius:50%;background:radial-gradient(circle at 50% 35%,#98e07c 0%,#52b542 50%,#2f8d28 100%)"></div>
<div class="t" style="left:1069px;top:524px;width:60px;text-align:left;">Complete</div>
<div class="btn dd" style="left:1119px;top:522px;width:14px;height:15px"><svg width="12" height="13"><path d="M2.5 5.0 L6.0 8.5 L9.5 5.0" fill="none" stroke="#1b5c9c" stroke-width="2"/></svg></div>
<div class="t" style="left:1140px;top:524px;width:91px;text-align:left;">Job - New</div>
<div class="btn el" style="left:1230px;top:522px;width:14px;height:15px"><div style="left:2px;top:6px;width:2px;height:2px;background:#1b5c9c"></div><div style="left:5px;top:6px;width:2px;height:2px;background:#1b5c9c"></div><div style="left:8px;top:6px;width:2px;height:2px;background:#1b5c9c"></div></div>
<div class="t" style="left:1251px;top:524px;width:71px;text-align:left;">OUTWORK</div>
<div class="t" style="left:1326px;top:524px;width:97px;text-align:right;font-size:11px;">R3 042,98</div>
<div class="t" style="left:1428px;top:524px;width:76px;text-align:right;font-size:11px;">0</div>
<div class="t" style="left:1509px;top:524px;width:69px;text-align:right;font-size:11px;">10</div>
<div class="t" style="left:1583px;top:524px;width:73px;text-align:right;font-size:11px;">0</div>
<div class="t" style="left:1661px;top:524px;width:70px;text-align:right;font-size:11px;">304.298000</div>
<div class="t" style="left:1736px;top:524px;width:70px;text-align:right;font-size:11px;">3499.427</div>
<div class="t" style="left:1813px;top:524px;width:59px;text-align:left;">Michael</div>
<div style="left:25px;top:56px;width:1px;height:485px;background:#a4a4a4"></div>
<div style="left:88px;top:100px;width:1px;height:441px;background:#e4e4e4"></div>
<div style="left:248px;top:100px;width:1px;height:441px;background:#e4e4e4"></div>
<div style="left:323px;top:100px;width:1px;height:441px;background:#e4e4e4"></div>
<div style="left:565px;top:100px;width:1px;height:441px;background:#e4e4e4"></div>
<div style="left:700px;top:100px;width:1px;height:441px;background:#e4e4e4"></div>
<div style="left:751px;top:100px;width:1px;height:441px;background:#e4e4e4"></div>
<div style="left:841px;top:100px;width:1px;height:441px;background:#e4e4e4"></div>
<div style="left:954px;top:100px;width:1px;height:441px;background:#e4e4e4"></div>
<div style="left:1045px;top:100px;width:1px;height:441px;background:#e4e4e4"></div>
<div style="left:1136px;top:100px;width:1px;height:441px;background:#e4e4e4"></div>
<div style="left:1247px;top:100px;width:1px;height:441px;background:#e4e4e4"></div>
<div style="left:1324px;top:100px;width:1px;height:441px;background:#e4e4e4"></div>
<div style="left:1426px;top:100px;width:1px;height:441px;background:#e4e4e4"></div>
<div style="left:1507px;top:100px;width:1px;height:441px;background:#e4e4e4"></div>
<div style="left:1581px;top:100px;width:1px;height:441px;background:#e4e4e4"></div>
<div style="left:1659px;top:100px;width:1px;height:441px;background:#e4e4e4"></div>
<div style="left:1734px;top:100px;width:1px;height:441px;background:#e4e4e4"></div>
<div style="left:1809px;top:100px;width:1px;height:441px;background:#e4e4e4"></div>
<div style="left:1874px;top:100px;width:1px;height:441px;background:#e4e4e4"></div>
<div style="left:88px;top:100px;width:1px;height:20px;background:#c4d2f4"></div>
<div style="left:248px;top:100px;width:1px;height:20px;background:#c4d2f4"></div>
<div style="left:323px;top:100px;width:1px;height:20px;background:#c4d2f4"></div>
<div style="left:565px;top:100px;width:1px;height:20px;background:#c4d2f4"></div>
<div style="left:700px;top:100px;width:1px;height:20px;background:#c4d2f4"></div>
<div style="left:751px;top:100px;width:1px;height:20px;background:#c4d2f4"></div>
<div style="left:841px;top:100px;width:1px;height:20px;background:#c4d2f4"></div>
<div style="left:954px;top:100px;width:1px;height:20px;background:#c4d2f4"></div>
<div style="left:1045px;top:100px;width:1px;height:20px;background:#c4d2f4"></div>
<div style="left:1136px;top:100px;width:1px;height:20px;background:#c4d2f4"></div>
<div style="left:1247px;top:100px;width:1px;height:20px;background:#c4d2f4"></div>
<div style="left:1324px;top:100px;width:1px;height:20px;background:#c4d2f4"></div>
<div style="left:1426px;top:100px;width:1px;height:20px;background:#c4d2f4"></div>
<div style="left:1507px;top:100px;width:1px;height:20px;background:#c4d2f4"></div>
<div style="left:1581px;top:100px;width:1px;height:20px;background:#c4d2f4"></div>
<div style="left:1659px;top:100px;width:1px;height:20px;background:#c4d2f4"></div>
<div style="left:1734px;top:100px;width:1px;height:20px;background:#c4d2f4"></div>
<div style="left:1809px;top:100px;width:1px;height:20px;background:#c4d2f4"></div>
<div style="left:1874px;top:100px;width:1px;height:20px;background:#c4d2f4"></div>
<div style="left:1888px;top:75px;width:17px;height:466px;border:1px solid #8fb0c4;border-radius:3px;background:linear-gradient(90deg,#dff2fc,#f4fbff 50%,#e6f5fc)"></div>
<div class="btn" style="left:1888px;top:75px;width:17px;height:14px;border-radius:3px"><svg width="15" height="12" style="position:absolute;left:0;top:0"><path d="M3 8.5 L7.5 4 L12 8.5" fill="none" stroke="#1b5c9c" stroke-width="2"/></svg></div>
<div class="btn" style="left:1888px;top:92px;width:17px;height:17px;border-radius:4px"><svg width="15" height="15" style="position:absolute;left:0;top:0"><path d="M4 5.3H11M4 7.3H11M4 9.3H11" stroke="#1b6a9c" stroke-width="1.3"/></svg></div>
<div class="btn" style="left:1888px;top:526px;width:17px;height:15px;border-radius:3px"><svg width="15" height="13" style="position:absolute;left:0;top:0"><path d="M3 4 L7.5 8.5 L12 4" fill="none" stroke="#1b5c9c" stroke-width="2"/></svg></div>
<div style="left:11px;top:541px;width:1895px;height:26px;border:1px solid #a8a8a8;background:linear-gradient(#f4f4f4,#e2e2e2)"></div>
<div style="left:27px;top:544px;width:61px;height:20px;border:1px solid #d0d0d0;background:linear-gradient(#fdfdfd,#f0f0f0)"></div>
<div class="t" style="left:30px;top:548px;width:57px;text-align:right;font-size:11px;">1342</div>
<div style="left:702px;top:544px;width:49px;height:20px;border:1px solid #d0d0d0;background:linear-gradient(#fdfdfd,#f0f0f0)"></div>
<div class="t" style="left:705px;top:548px;width:50px;text-align:left;">SUM=9...</div>
<div style="left:1326px;top:544px;width:100px;height:20px;border:1px solid #d0d0d0;background:linear-gradient(#fdfdfd,#f0f0f0)"></div>
<div class="t" style="left:1329px;top:548px;width:100px;text-align:left;">SUM=R4 492 868,...</div>
<div style="left:1428px;top:544px;width:79px;height:20px;border:1px solid #d0d0d0;background:linear-gradient(#fdfdfd,#f0f0f0)"></div>
<div class="t" style="left:1431px;top:548px;width:75px;text-align:right;font-size:11px;">70 103</div>
<div style="left:1583px;top:544px;width:76px;height:20px;border:1px solid #d0d0d0;background:linear-gradient(#fdfdfd,#f0f0f0)"></div>
<div class="t" style="left:1586px;top:548px;width:72px;text-align:right;font-size:11px;">731 821</div>
<div class="tbb" style="left:12px;top:568px;width:19px;height:20px"><svg width="17" height="17" style="position:absolute;left:0;top:0"><defs><radialGradient id="ga" cx="50%" cy="40%" r="60%"><stop offset="0" stop-color="#e8f8b8"/><stop offset="1" stop-color="#8cc048"/></radialGradient></defs><path d="M6.5 2.5h4v4h4v4h-4v4h-4v-4h-4v-4h4z" fill="url(#ga)" stroke="#6c9a40" stroke-width="1"/></svg></div>
<div class="tbb" style="left:33px;top:568px;width:19px;height:20px"><svg width="17" height="17" style="position:absolute;left:0;top:0"><rect x="3.5" y="2.5" width="11" height="11" fill="#f4f8fc" stroke="#7890a8"/><rect x="4" y="3" width="10" height="2" fill="#c8d8e8"/><path d="M5 4h7" stroke="#4a7a4a" stroke-width=".8"/><rect x="5" y="7" width="2" height="1.5" fill="#8aa8e0"/><path d="M3 15.5 L12 6.5 L14 8.5 L5 17 Z" fill="#f4d070" stroke="#c8a040" stroke-width=".8"/><path d="M2.5 16.5 L4 15 L5 16Z" fill="#222"/></svg></div>
<div class="tbb" style="left:54px;top:568px;width:19px;height:20px"><svg width="17" height="17" style="position:absolute;left:0;top:0"><path d="M12.5 5.5 A5 5 0 0 0 3.5 8" fill="none" stroke="#4cbc6a" stroke-width="3"/><path d="M4.5 11.5 A5 5 0 0 0 13.5 9" fill="none" stroke="#3aa858" stroke-width="3"/><path d="M10 2.5 L15 4 L12.5 8Z" fill="#4cbc6a"/><path d="M7 14.5 L2 13 L4.5 9Z" fill="#1e7a3a"/></svg></div>
<div class="tbb" style="left:74px;top:568px;width:19px;height:20px"><svg width="17" height="17" style="position:absolute;left:0;top:0"><path d="M1.5 5 L15.5 5 L8.5 13.5 Z" fill="#f03848" stroke="#c02838" stroke-width=".8"/><path d="M3 5.6 L8 5.6 L8.5 12 Z" fill="#ffd0d4"/></svg></div>
<div class="tbb" style="left:94px;top:568px;width:19px;height:20px"><svg width="17" height="17" style="position:absolute;left:0;top:0"><rect x="2.5" y="2.5" width="11" height="12" fill="#eef6fc" stroke="#88a0b8"/><path d="M4 4.5h8" stroke="#70b070" stroke-width=".8"/><path d="M4 7h2M4 9h2M4 11h2" stroke="#b8c8e0" stroke-width="1.2"/><rect x="8" y="8.5" width="7" height="7" rx="1" fill="#cfeefc" stroke="#6a9ab8" stroke-width=".8"/><rect x="9.5" y="12.5" width="4" height="1.5" fill="#000"/></svg></div>
<div class="tbb" style="left:114px;top:568px;width:19px;height:20px"><svg width="17" height="17" style="position:absolute;left:0;top:0"><path d="M5 2.5h6l2 2v4h-8z" fill="#f8fbfd" stroke="#707c88" stroke-width=".9"/><rect x="2" y="8" width="13" height="6" rx="2" fill="#dcdfe4" stroke="#5a6470" stroke-width=".9"/><rect x="4" y="11" width="9" height="1" fill="#8a7a5a"/><rect x="4.5" y="13" width="8" height="2" fill="#fff" stroke="#707c88" stroke-width=".7"/></svg></div>
<div class="tbb" style="left:134px;top:568px;width:19px;height:20px"><svg width="17" height="17" style="position:absolute;left:0;top:0"><ellipse cx="7.5" cy="4" rx="5.5" ry="2" fill="#f0f2f4" stroke="#b8bcc0" stroke-width=".8"/><path d="M2 4v9c0 1 2.5 2 5.5 2s5.5-1 5.5-2V4" fill="#e6e8ea" stroke="#b8bcc0" stroke-width=".8"/><circle cx="11.5" cy="12" r="3.2" fill="#d8dadc" stroke="#505860" stroke-width="1.4" stroke-dasharray="1.3 1"/><circle cx="11.5" cy="12" r="1" fill="#fff"/></svg></div>
<div style="left:153px;top:569px;width:1752px;height:17px;border:1px solid #8fb0c4;border-radius:3px;background:linear-gradient(#f6fbfe,#eaf6fc)"></div>
<div style="left:153px;top:569px;width:13px;height:17px;border:1px solid #8fb0c4;border-radius:3px;background:linear-gradient(#f0f8fd,#cde9f8)"><svg width="11" height="15" style="position:absolute;left:0;top:0"><path d="M7 3.5 L3.5 7.5 L7 11.5" fill="none" stroke="#1b5c9c" stroke-width="2"/></svg></div>
<div style="left:1891px;top:569px;width:14px;height:17px;border:1px solid #8fb0c4;border-radius:3px;background:linear-gradient(#f0f8fd,#cde9f8)"><svg width="12" height="15" style="position:absolute;left:0;top:0"><path d="M4.5 3.5 L8 7.5 L4.5 11.5" fill="none" stroke="#1b5c9c" stroke-width="2"/></svg></div>
<div style="left:166px;top:569px;width:1453px;height:17px;border:1px solid #92bcd4;border-radius:3px;background:linear-gradient(#f4f4ff 0%,#dceefc 40%,#98cef4 55%,#b0e0f8 100%)"></div>
<div style="left:892px;top:574px;width:1px;height:7px;background:#2a6a98"></div>
<div style="left:894px;top:574px;width:1px;height:7px;background:#2a6a98"></div>
<div style="left:896px;top:574px;width:1px;height:7px;background:#2a6a98"></div>
<div style="left:4px;top:597px;width:1908px;height:6px;border:1px solid #6fa8d8;border-radius:3px;background:linear-gradient(#cfe8fb,#8cc4f0)"></div>
<div style="left:950px;top:598px;width:1px;height:4px;background:#6a9ac8"></div>
<div style="left:965px;top:598px;width:1px;height:4px;background:#6a9ac8"></div>
<div style="left:6px;top:606px;width:1904px;height:417px;border:1px solid #b9b9b9;border-radius:3px;background:#fafafa"></div>
<div style="left:7px;top:607px;width:1902px;height:19px;background:linear-gradient(#f8f8f8,#ededed)"></div>
<div style="left:7px;top:626px;width:1902px;height:1px;background:#dcdcdc"></div>
<div class="btn" style="left:8px;top:609px;width:19px;height:15px"><svg width="17" height="13" style="position:absolute;left:0;top:0"><path d="M5.5 7.5 L8.5 4.5 L11.5 7.5" fill="none" stroke="#1b5c9c" stroke-width="1.6"/></svg></div>
<div class="t" style="left:31px;top:611px;width:100px;text-align:left;">Job Details</div>
<div style="left:8px;top:649px;width:1896px;height:367px;border:1px solid #b9b9b9;border-radius:2px;background:#fafafa"></div>
<div class="tab" style="left:13px;top:630px;width:59px;height:19px;"></div>
<div class="t" style="left:13px;top:634px;width:59px;text-align:center;color:#12243e">Deliveries</div>
<div class="tabA" style="left:73px;top:628px;width:58px;height:22px;"></div>
<div class="t" style="left:73px;top:633px;width:58px;text-align:center;color:#0a1f0a">Invoices</div>
<div class="tab" style="left:132px;top:630px;width:43px;height:19px;"></div>
<div class="t" style="left:132px;top:634px;width:43px;text-align:center;color:#12243e">Issues</div>
<div class="tab" style="left:177px;top:630px;width:103px;height:19px;"></div>
<div class="t" style="left:177px;top:634px;width:103px;text-align:center;color:#12243e">Requests - Orders</div>
<div class="tab" style="left:281px;top:630px;width:49px;height:19px;"></div>
<div class="t" style="left:281px;top:634px;width:49px;text-align:center;color:#12243e">Notes</div>
<div class="tab" style="left:331px;top:630px;width:57px;height:19px;"></div>
<div class="t" style="left:331px;top:634px;width:57px;text-align:center;color:#12243e">Time Log</div>
<div style="left:15px;top:656px;width:1882px;height:162px;border:1px solid #b9b9b9;border-radius:2px;background:#fff"></div>
<div class="hdr" style="left:17px;top:658px;width:1878px;height:20px;border:1px solid #a8a8a8;border-radius:2px 2px 0 0"></div>
<div class="ind" style="left:18px;top:659px;width:13px;height:18px;"></div>
<div style="left:31px;top:659px;width:1px;height:19px;background:#a5a5a5"></div>
<div style="left:32px;top:659px;width:1px;height:18px;background:#fff"></div>
<div style="left:106px;top:659px;width:1px;height:19px;background:#a5a5a5"></div>
<div style="left:107px;top:659px;width:1px;height:18px;background:#fff"></div>
<div style="left:181px;top:659px;width:1px;height:19px;background:#a5a5a5"></div>
<div style="left:182px;top:659px;width:1px;height:18px;background:#fff"></div>
<div style="left:256px;top:659px;width:1px;height:19px;background:#a5a5a5"></div>
<div style="left:257px;top:659px;width:1px;height:18px;background:#fff"></div>
<div style="left:360px;top:659px;width:1px;height:19px;background:#a5a5a5"></div>
<div style="left:361px;top:659px;width:1px;height:18px;background:#fff"></div>
<div style="left:435px;top:659px;width:1px;height:19px;background:#a5a5a5"></div>
<div style="left:436px;top:659px;width:1px;height:18px;background:#fff"></div>
<div style="left:510px;top:659px;width:1px;height:19px;background:#a5a5a5"></div>
<div style="left:511px;top:659px;width:1px;height:18px;background:#fff"></div>
<div style="left:648px;top:659px;width:1px;height:19px;background:#a5a5a5"></div>
<div style="left:649px;top:659px;width:1px;height:18px;background:#fff"></div>
<div style="left:754px;top:659px;width:1px;height:19px;background:#a5a5a5"></div>
<div style="left:755px;top:659px;width:1px;height:18px;background:#fff"></div>
<div style="left:874px;top:659px;width:1px;height:19px;background:#a5a5a5"></div>
<div style="left:875px;top:659px;width:1px;height:18px;background:#fff"></div>
<div style="left:949px;top:659px;width:1px;height:19px;background:#a5a5a5"></div>
<div style="left:950px;top:659px;width:1px;height:18px;background:#fff"></div>
<div style="left:1024px;top:659px;width:1px;height:19px;background:#a5a5a5"></div>
<div style="left:1025px;top:659px;width:1px;height:18px;background:#fff"></div>
<div style="left:1099px;top:659px;width:1px;height:19px;background:#a5a5a5"></div>
<div style="left:1100px;top:659px;width:1px;height:18px;background:#fff"></div>
<div style="left:1174px;top:659px;width:1px;height:19px;background:#a5a5a5"></div>
<div style="left:1175px;top:659px;width:1px;height:18px;background:#fff"></div>
<div style="left:1249px;top:659px;width:1px;height:19px;background:#a5a5a5"></div>
<div style="left:1250px;top:659px;width:1px;height:18px;background:#fff"></div>
<div style="left:1324px;top:659px;width:1px;height:19px;background:#a5a5a5"></div>
<div style="left:1325px;top:659px;width:1px;height:18px;background:#fff"></div>
<div style="left:1427px;top:659px;width:1px;height:19px;background:#a5a5a5"></div>
<div style="left:1428px;top:659px;width:1px;height:18px;background:#fff"></div>
<div style="left:1503px;top:659px;width:1px;height:19px;background:#a5a5a5"></div>
<div style="left:1504px;top:659px;width:1px;height:18px;background:#fff"></div>
<div class="t" style="left:35px;top:661px;width:69px;text-align:left;">Invoice No.</div>
<div class="t" style="left:110px;top:661px;width:69px;text-align:left;">Nett</div>
<div class="t" style="left:185px;top:661px;width:69px;text-align:left;">Discount</div>
<div class="t" style="left:260px;top:661px;width:98px;text-align:left;">Nett Less Disc.</div>
<div class="t" style="left:364px;top:661px;width:69px;text-align:left;">VAT</div>
<div class="t" style="left:439px;top:661px;width:69px;text-align:left;">Total (Incl)</div>
<div class="t" style="left:514px;top:661px;width:132px;text-align:left;">Client</div>
<div class="t" style="left:652px;top:661px;width:100px;text-align:left;">Branches</div>
<div class="t" style="left:758px;top:661px;width:114px;text-align:left;">Contact</div>
<div class="t" style="left:878px;top:661px;width:69px;text-align:left;">Rep</div>
<div class="t" style="left:953px;top:661px;width:69px;text-align:left;">Date</div>
<div class="t" style="left:1028px;top:661px;width:69px;text-align:left;">Due Date</div>
<div class="t" style="left:1103px;top:661px;width:69px;text-align:left;">Note</div>
<div class="t" style="left:1178px;top:661px;width:69px;text-align:left;">Printed</div>
<div class="t" style="left:1253px;top:661px;width:69px;text-align:left;">Exported</div>
<div class="t" style="left:1328px;top:661px;width:97px;text-align:left;">Deposit Received</div>
<div class="t" style="left:1431px;top:661px;width:70px;text-align:left;">Closed</div>
<svg style="position:absolute;left:167px;top:662px" width="9" height="9"><path d="M4.5 0.5 L8.5 8 L0.5 8 Z" fill="none" stroke="#555" stroke-width="1"/></svg>
<div class="ind" style="left:17px;top:678px;width:14px;height:20px;border:1px solid #a8a8a8;border-top:none"></div>
<svg style="position:absolute;left:20px;top:683px" width="8" height="9"><path d="M1.5 1 L5.5 4.5 L1.5 8" fill="none" stroke="#555" stroke-width="2"/></svg>
<div style="left:31px;top:678px;width:1472px;height:20px;background:#7993dc"></div>
<div style="left:106px;top:678px;width:1px;height:20px;background:#c4d2f4"></div>
<div style="left:181px;top:678px;width:1px;height:20px;background:#c4d2f4"></div>
<div style="left:256px;top:678px;width:1px;height:20px;background:#c4d2f4"></div>
<div style="left:360px;top:678px;width:1px;height:20px;background:#c4d2f4"></div>
<div style="left:435px;top:678px;width:1px;height:20px;background:#c4d2f4"></div>
<div style="left:510px;top:678px;width:1px;height:20px;background:#c4d2f4"></div>
<div style="left:648px;top:678px;width:1px;height:20px;background:#c4d2f4"></div>
<div style="left:754px;top:678px;width:1px;height:20px;background:#c4d2f4"></div>
<div style="left:874px;top:678px;width:1px;height:20px;background:#c4d2f4"></div>
<div style="left:949px;top:678px;width:1px;height:20px;background:#c4d2f4"></div>
<div style="left:1024px;top:678px;width:1px;height:20px;background:#c4d2f4"></div>
<div style="left:1099px;top:678px;width:1px;height:20px;background:#c4d2f4"></div>
<div style="left:1174px;top:678px;width:1px;height:20px;background:#c4d2f4"></div>
<div style="left:1249px;top:678px;width:1px;height:20px;background:#c4d2f4"></div>
<div style="left:1324px;top:678px;width:1px;height:20px;background:#c4d2f4"></div>
<div style="left:1427px;top:678px;width:1px;height:20px;background:#c4d2f4"></div>
<div class="ts" style="left:33px;top:682px;width:70px;text-align:right;font-size:11px;">1241</div>
<div class="ts" style="left:108px;top:682px;width:70px;text-align:right;font-size:11px;">R54,90</div>
<div class="ts" style="left:183px;top:682px;width:70px;text-align:right;font-size:11px;">R0,00</div>
<div class="ts" style="left:258px;top:682px;width:99px;text-align:right;font-size:11px;">R54,90</div>
<div class="ts" style="left:362px;top:682px;width:70px;text-align:right;font-size:11px;">R8,24</div>
<div class="ts" style="left:437px;top:682px;width:70px;text-align:right;font-size:11px;">R63,14</div>
<div class="ts" style="left:514px;top:682px;width:132px;text-align:left;">Dolphin Worxs Systems</div>
<div class="ts" style="left:758px;top:682px;width:114px;text-align:left;">Cliff Rangwedzi</div>
<div class="ts" style="left:878px;top:682px;width:69px;text-align:left;">Michael Savi...</div>
<div class="ts" style="left:953px;top:682px;width:55px;text-align:left;font-size:11px;">2024/11...</div>
<div class="btn dd" style="left:1008px;top:681px;width:13px;height:14px"><svg width="11" height="12"><path d="M2.0 4.5 L5.5 8.0 L9.0 4.5" fill="none" stroke="#1b5c9c" stroke-width="2"/></svg></div>
<div class="ts" style="left:1028px;top:682px;width:55px;text-align:left;font-size:11px;">2024/11...</div>
<div class="btn dd" style="left:1083px;top:681px;width:13px;height:14px"><svg width="11" height="12"><path d="M2.0 4.5 L5.5 8.0 L9.0 4.5" fill="none" stroke="#1b5c9c" stroke-width="2"/></svg></div>
<div style="left:1206px;top:683px;width:10px;height:10px;border:1px solid #9ccaf0;background:linear-gradient(#e8f6ff,#b8dcf8)"></div>
<div style="left:1281px;top:683px;width:10px;height:10px;border:1px solid #9ccaf0;background:linear-gradient(#e8f6ff,#b8dcf8)"></div>
<div class="ts" style="left:1326px;top:682px;width:98px;text-align:right;font-size:11px;">0</div>
<div style="left:1460px;top:683px;width:10px;height:10px;border:1px solid #9ccaf0;background:linear-gradient(#e8f6ff,#b8dcf8)"></div>
<div class="tbb" style="left:18px;top:796px;width:18px;height:19px"><svg width="17" height="17" style="position:absolute;left:0;top:0"><defs><radialGradient id="ga" cx="50%" cy="40%" r="60%"><stop offset="0" stop-color="#e8f8b8"/><stop offset="1" stop-color="#8cc048"/></radialGradient></defs><path d="M6.5 2.5h4v4h4v4h-4v4h-4v-4h-4v-4h4z" fill="url(#ga)" stroke="#6c9a40" stroke-width="1"/></svg></div>
<div class="tbb" style="left:39px;top:796px;width:18px;height:19px"><svg width="17" height="17" style="position:absolute;left:0;top:0"><rect x="3.5" y="2.5" width="11" height="11" fill="#f4f8fc" stroke="#7890a8"/><rect x="4" y="3" width="10" height="2" fill="#c8d8e8"/><path d="M5 4h7" stroke="#4a7a4a" stroke-width=".8"/><rect x="5" y="7" width="2" height="1.5" fill="#8aa8e0"/><path d="M3 15.5 L12 6.5 L14 8.5 L5 17 Z" fill="#f4d070" stroke="#c8a040" stroke-width=".8"/><path d="M2.5 16.5 L4 15 L5 16Z" fill="#222"/></svg></div>
<div class="tbb" style="left:60px;top:796px;width:18px;height:19px"><svg width="17" height="17" style="position:absolute;left:0;top:0"><path d="M12.5 5.5 A5 5 0 0 0 3.5 8" fill="none" stroke="#4cbc6a" stroke-width="3"/><path d="M4.5 11.5 A5 5 0 0 0 13.5 9" fill="none" stroke="#3aa858" stroke-width="3"/><path d="M10 2.5 L15 4 L12.5 8Z" fill="#4cbc6a"/><path d="M7 14.5 L2 13 L4.5 9Z" fill="#1e7a3a"/></svg></div>
<div class="tbb" style="left:80px;top:796px;width:18px;height:19px"><svg width="17" height="17" style="position:absolute;left:0;top:0"><path d="M5 2.5h6l2 2v4h-8z" fill="#f8fbfd" stroke="#707c88" stroke-width=".9"/><rect x="2" y="8" width="13" height="6" rx="2" fill="#dcdfe4" stroke="#5a6470" stroke-width=".9"/><rect x="4" y="11" width="9" height="1" fill="#8a7a5a"/><rect x="4.5" y="13" width="8" height="2" fill="#fff" stroke="#707c88" stroke-width=".7"/></svg></div>
<div class="tbb" style="left:100px;top:796px;width:18px;height:19px"><svg width="17" height="17" style="position:absolute;left:0;top:0"><path d="M1.5 9 L8.5 2 L15 8.5 L8 15.5Z" fill="#eef0f2" stroke="#a0a8b0" stroke-width=".8"/><path d="M5 10.5 L9.5 6.5 L9.5 8.5 L14 8.5 L14 12.5 L9.5 12.5 L9.5 14.5Z" fill="#5ac85a" stroke="#2a8a3a" stroke-width=".7"/></svg></div>
<div class="tbb" style="left:120px;top:796px;width:18px;height:19px"><svg width="17" height="17" style="position:absolute;left:0;top:0"><ellipse cx="7.5" cy="4" rx="5.5" ry="2" fill="#f0f2f4" stroke="#b8bcc0" stroke-width=".8"/><path d="M2 4v9c0 1 2.5 2 5.5 2s5.5-1 5.5-2V4" fill="#e6e8ea" stroke="#b8bcc0" stroke-width=".8"/><circle cx="11.5" cy="12" r="3.2" fill="#d8dadc" stroke="#505860" stroke-width="1.4" stroke-dasharray="1.3 1"/><circle cx="11.5" cy="12" r="1" fill="#fff"/></svg></div>
<div style="left:140px;top:797px;width:1755px;height:17px;border:1px solid #c8c8c8;border-radius:3px;background:linear-gradient(#fbfbfb,#f2f2f2)"></div>
<div style="left:140px;top:797px;width:13px;height:17px;border:1px solid #c8c8c8;border-radius:3px;background:linear-gradient(#f4f4f4,#e2e2e2)"><svg width="11" height="15" style="position:absolute;left:0;top:0"><path d="M7 3.5 L3.5 7.5 L7 11.5" fill="none" stroke="#a0a0a0" stroke-width="2"/></svg></div>
<div style="left:1881px;top:797px;width:14px;height:17px;border:1px solid #c8c8c8;border-radius:3px;background:linear-gradient(#f4f4f4,#e2e2e2)"><svg width="12" height="15" style="position:absolute;left:0;top:0"><path d="M4.5 3.5 L8 7.5 L4.5 11.5" fill="none" stroke="#a0a0a0" stroke-width="2"/></svg></div>
<div style="left:15px;top:828px;width:1882px;height:181px;border:1px solid #b9b9b9;border-radius:2px;background:#fff"></div>
<div class="hdr" style="left:17px;top:830px;width:1878px;height:20px;border:1px solid #a8a8a8;border-radius:2px 2px 0 0"></div>
<div class="ind" style="left:18px;top:831px;width:13px;height:18px;"></div>
<div style="left:31px;top:831px;width:1px;height:19px;background:#a5a5a5"></div>
<div style="left:32px;top:831px;width:1px;height:18px;background:#fff"></div>
<div style="left:261px;top:831px;width:1px;height:19px;background:#a5a5a5"></div>
<div style="left:262px;top:831px;width:1px;height:18px;background:#fff"></div>
<div style="left:498px;top:831px;width:1px;height:19px;background:#a5a5a5"></div>
<div style="left:499px;top:831px;width:1px;height:18px;background:#fff"></div>
<div style="left:577px;top:831px;width:1px;height:19px;background:#a5a5a5"></div>
<div style="left:578px;top:831px;width:1px;height:18px;background:#fff"></div>
<div style="left:625px;top:831px;width:1px;height:19px;background:#a5a5a5"></div>
<div style="left:626px;top:831px;width:1px;height:18px;background:#fff"></div>
<div style="left:663px;top:831px;width:1px;height:19px;background:#a5a5a5"></div>
<div style="left:664px;top:831px;width:1px;height:18px;background:#fff"></div>
<div style="left:786px;top:831px;width:1px;height:19px;background:#a5a5a5"></div>
<div style="left:787px;top:831px;width:1px;height:18px;background:#fff"></div>
<div style="left:886px;top:831px;width:1px;height:19px;background:#a5a5a5"></div>
<div style="left:887px;top:831px;width:1px;height:18px;background:#fff"></div>
<div style="left:962px;top:831px;width:1px;height:19px;background:#a5a5a5"></div>
<div style="left:963px;top:831px;width:1px;height:18px;background:#fff"></div>
<div style="left:1046px;top:831px;width:1px;height:19px;background:#a5a5a5"></div>
<div style="left:1047px;top:831px;width:1px;height:18px;background:#fff"></div>
<div style="left:1149px;top:831px;width:1px;height:19px;background:#a5a5a5"></div>
<div style="left:1150px;top:831px;width:1px;height:18px;background:#fff"></div>
<div style="left:1251px;top:831px;width:1px;height:19px;background:#a5a5a5"></div>
<div style="left:1252px;top:831px;width:1px;height:18px;background:#fff"></div>
<div style="left:1318px;top:831px;width:1px;height:19px;background:#a5a5a5"></div>
<div style="left:1319px;top:831px;width:1px;height:18px;background:#fff"></div>
<div style="left:1384px;top:831px;width:1px;height:19px;background:#a5a5a5"></div>
<div style="left:1385px;top:831px;width:1px;height:18px;background:#fff"></div>
<div style="left:1481px;top:831px;width:1px;height:19px;background:#a5a5a5"></div>
<div style="left:1482px;top:831px;width:1px;height:18px;background:#fff"></div>
<div class="t" style="left:35px;top:833px;width:224px;text-align:left;">Product</div>
<div class="t" style="left:265px;top:833px;width:231px;text-align:left;">Note</div>
<div class="t" style="left:502px;top:833px;width:73px;text-align:left;">Order No</div>
<div class="t" style="left:581px;top:833px;width:42px;text-align:left;">Wt/#</div>
<div class="t" style="left:629px;top:833px;width:32px;text-align:left;">Ver</div>
<div class="t" style="left:667px;top:833px;width:117px;text-align:left;">Invoice Line Qty</div>
<div class="t" style="left:790px;top:833px;width:94px;text-align:left;">Unit Price</div>
<div class="t" style="left:890px;top:833px;width:70px;text-align:left;">L/Nett</div>
<div class="t" style="left:966px;top:833px;width:78px;text-align:left;">Disc%</div>
<div class="t" style="left:1050px;top:833px;width:97px;text-align:left;">R Discount</div>
<div class="t" style="left:1153px;top:833px;width:96px;text-align:left;">L/Nett Less Disc.</div>
<div class="t" style="left:1255px;top:833px;width:61px;text-align:left;">VAT%</div>
<div class="t" style="left:1322px;top:833px;width:60px;text-align:left;">VAT</div>
<div class="t" style="left:1388px;top:833px;width:91px;text-align:left;">Line Total (Incl)</div>
<div class="ind" style="left:17px;top:849px;width:14px;height:22px;border:1px solid #a8a8a8;border-top:none"></div>
<svg style="position:absolute;left:20px;top:855px" width="8" height="9"><path d="M1.5 1 L5.5 4.5 L1.5 8" fill="none" stroke="#555" stroke-width="2"/></svg>
<div style="left:31px;top:850px;width:1353px;height:20px;background:#7993dc"></div>
<div style="left:1384px;top:850px;width:97px;height:20px;background:#fff;border-right:1px solid #e4e4e4;border-bottom:1px solid #e4e4e4"></div>
<div style="left:261px;top:850px;width:1px;height:20px;background:#c4d2f4"></div>
<div style="left:498px;top:850px;width:1px;height:20px;background:#c4d2f4"></div>
<div style="left:577px;top:850px;width:1px;height:20px;background:#c4d2f4"></div>
<div style="left:625px;top:850px;width:1px;height:20px;background:#c4d2f4"></div>
<div style="left:663px;top:850px;width:1px;height:20px;background:#c4d2f4"></div>
<div style="left:786px;top:850px;width:1px;height:20px;background:#c4d2f4"></div>
<div style="left:886px;top:850px;width:1px;height:20px;background:#c4d2f4"></div>
<div style="left:962px;top:850px;width:1px;height:20px;background:#c4d2f4"></div>
<div style="left:1046px;top:850px;width:1px;height:20px;background:#c4d2f4"></div>
<div style="left:1149px;top:850px;width:1px;height:20px;background:#c4d2f4"></div>
<div style="left:1251px;top:850px;width:1px;height:20px;background:#c4d2f4"></div>
<div style="left:1318px;top:850px;width:1px;height:20px;background:#c4d2f4"></div>
<div class="ts" style="left:35px;top:854px;width:224px;text-align:left;">Default Tax Service Item</div>
<div class="ts" style="left:265px;top:854px;width:217px;text-align:left;">Bundle 12345</div>
<div class="btn el" style="left:482px;top:852px;width:14px;height:15px"><div style="left:2px;top:6px;width:2px;height:2px;background:#1b5c9c"></div><div style="left:5px;top:6px;width:2px;height:2px;background:#1b5c9c"></div><div style="left:8px;top:6px;width:2px;height:2px;background:#1b5c9c"></div></div>
<div class="ts" style="left:502px;top:854px;width:73px;text-align:left;font-size:11px;">156458</div>
<div class="ts" style="left:579px;top:854px;width:43px;text-align:right;font-size:11px;">1354</div>
<div class="ts" style="left:627px;top:854px;width:33px;text-align:right;font-size:11px;">1</div>
<div class="ts" style="left:665px;top:854px;width:118px;text-align:right;font-size:11px;">10</div>
<div class="ts" style="left:788px;top:854px;width:95px;text-align:right;font-size:11px;">R5,490000</div>
<div class="ts" style="left:888px;top:854px;width:71px;text-align:right;font-size:11px;">R54,90</div>
<div class="ts" style="left:964px;top:854px;width:79px;text-align:right;font-size:11px;">0.00</div>
<div class="ts" style="left:1048px;top:854px;width:98px;text-align:right;font-size:11px;">R0,00</div>
<div class="ts" style="left:1151px;top:854px;width:97px;text-align:right;font-size:11px;">R54,90</div>
<div class="ts" style="left:1253px;top:854px;width:62px;text-align:right;font-size:11px;">15.00</div>
<div class="ts" style="left:1320px;top:854px;width:61px;text-align:right;font-size:11px;">R8,24</div>
<div class="t" style="left:1386px;top:854px;width:92px;text-align:right;font-size:11px;">R63,14</div>
<div class="tbb" style="left:18px;top:986px;width:19px;height:20px"><svg width="17" height="17" style="position:absolute;left:0;top:0"><defs><radialGradient id="ga" cx="50%" cy="40%" r="60%"><stop offset="0" stop-color="#e8f8b8"/><stop offset="1" stop-color="#8cc048"/></radialGradient></defs><path d="M6.5 2.5h4v4h4v4h-4v4h-4v-4h-4v-4h4z" fill="url(#ga)" stroke="#6c9a40" stroke-width="1"/></svg></div>
<div class="tbb" style="left:39px;top:986px;width:19px;height:20px"><svg width="17" height="17" style="position:absolute;left:0;top:0"><rect x="2" y="6.5" width="13" height="4" rx="2" fill="#e86a6a" stroke="#b84848" stroke-width="0.8"/><rect x="4" y="7.2" width="9" height="1.2" fill="#f8b0b0"/></svg></div>
<div class="tbb" style="left:60px;top:986px;width:19px;height:20px"><svg width="17" height="17" style="position:absolute;left:0;top:0"><rect x="3.5" y="2.5" width="11" height="11" fill="#f4f8fc" stroke="#7890a8"/><rect x="4" y="3" width="10" height="2" fill="#c8d8e8"/><path d="M5 4h7" stroke="#4a7a4a" stroke-width=".8"/><rect x="5" y="7" width="2" height="1.5" fill="#8aa8e0"/><path d="M3 15.5 L12 6.5 L14 8.5 L5 17 Z" fill="#f4d070" stroke="#c8a040" stroke-width=".8"/><path d="M2.5 16.5 L4 15 L5 16Z" fill="#222"/></svg></div>
<div style="left:80px;top:987px;width:1815px;height:17px;border:1px solid #c8c8c8;border-radius:3px;background:linear-gradient(#fbfbfb,#f2f2f2)"></div>
<div style="left:80px;top:987px;width:13px;height:17px;border:1px solid #c8c8c8;border-radius:3px;background:linear-gradient(#f4f4f4,#e2e2e2)"><svg width="11" height="15" style="position:absolute;left:0;top:0"><path d="M7 3.5 L3.5 7.5 L7 11.5" fill="none" stroke="#a0a0a0" stroke-width="2"/></svg></div>
<div style="left:1881px;top:987px;width:14px;height:17px;border:1px solid #c8c8c8;border-radius:3px;background:linear-gradient(#f4f4f4,#e2e2e2)"><svg width="12" height="15" style="position:absolute;left:0;top:0"><path d="M4.5 3.5 L8 7.5 L4.5 11.5" fill="none" stroke="#a0a0a0" stroke-width="2"/></svg></div></body></html>
